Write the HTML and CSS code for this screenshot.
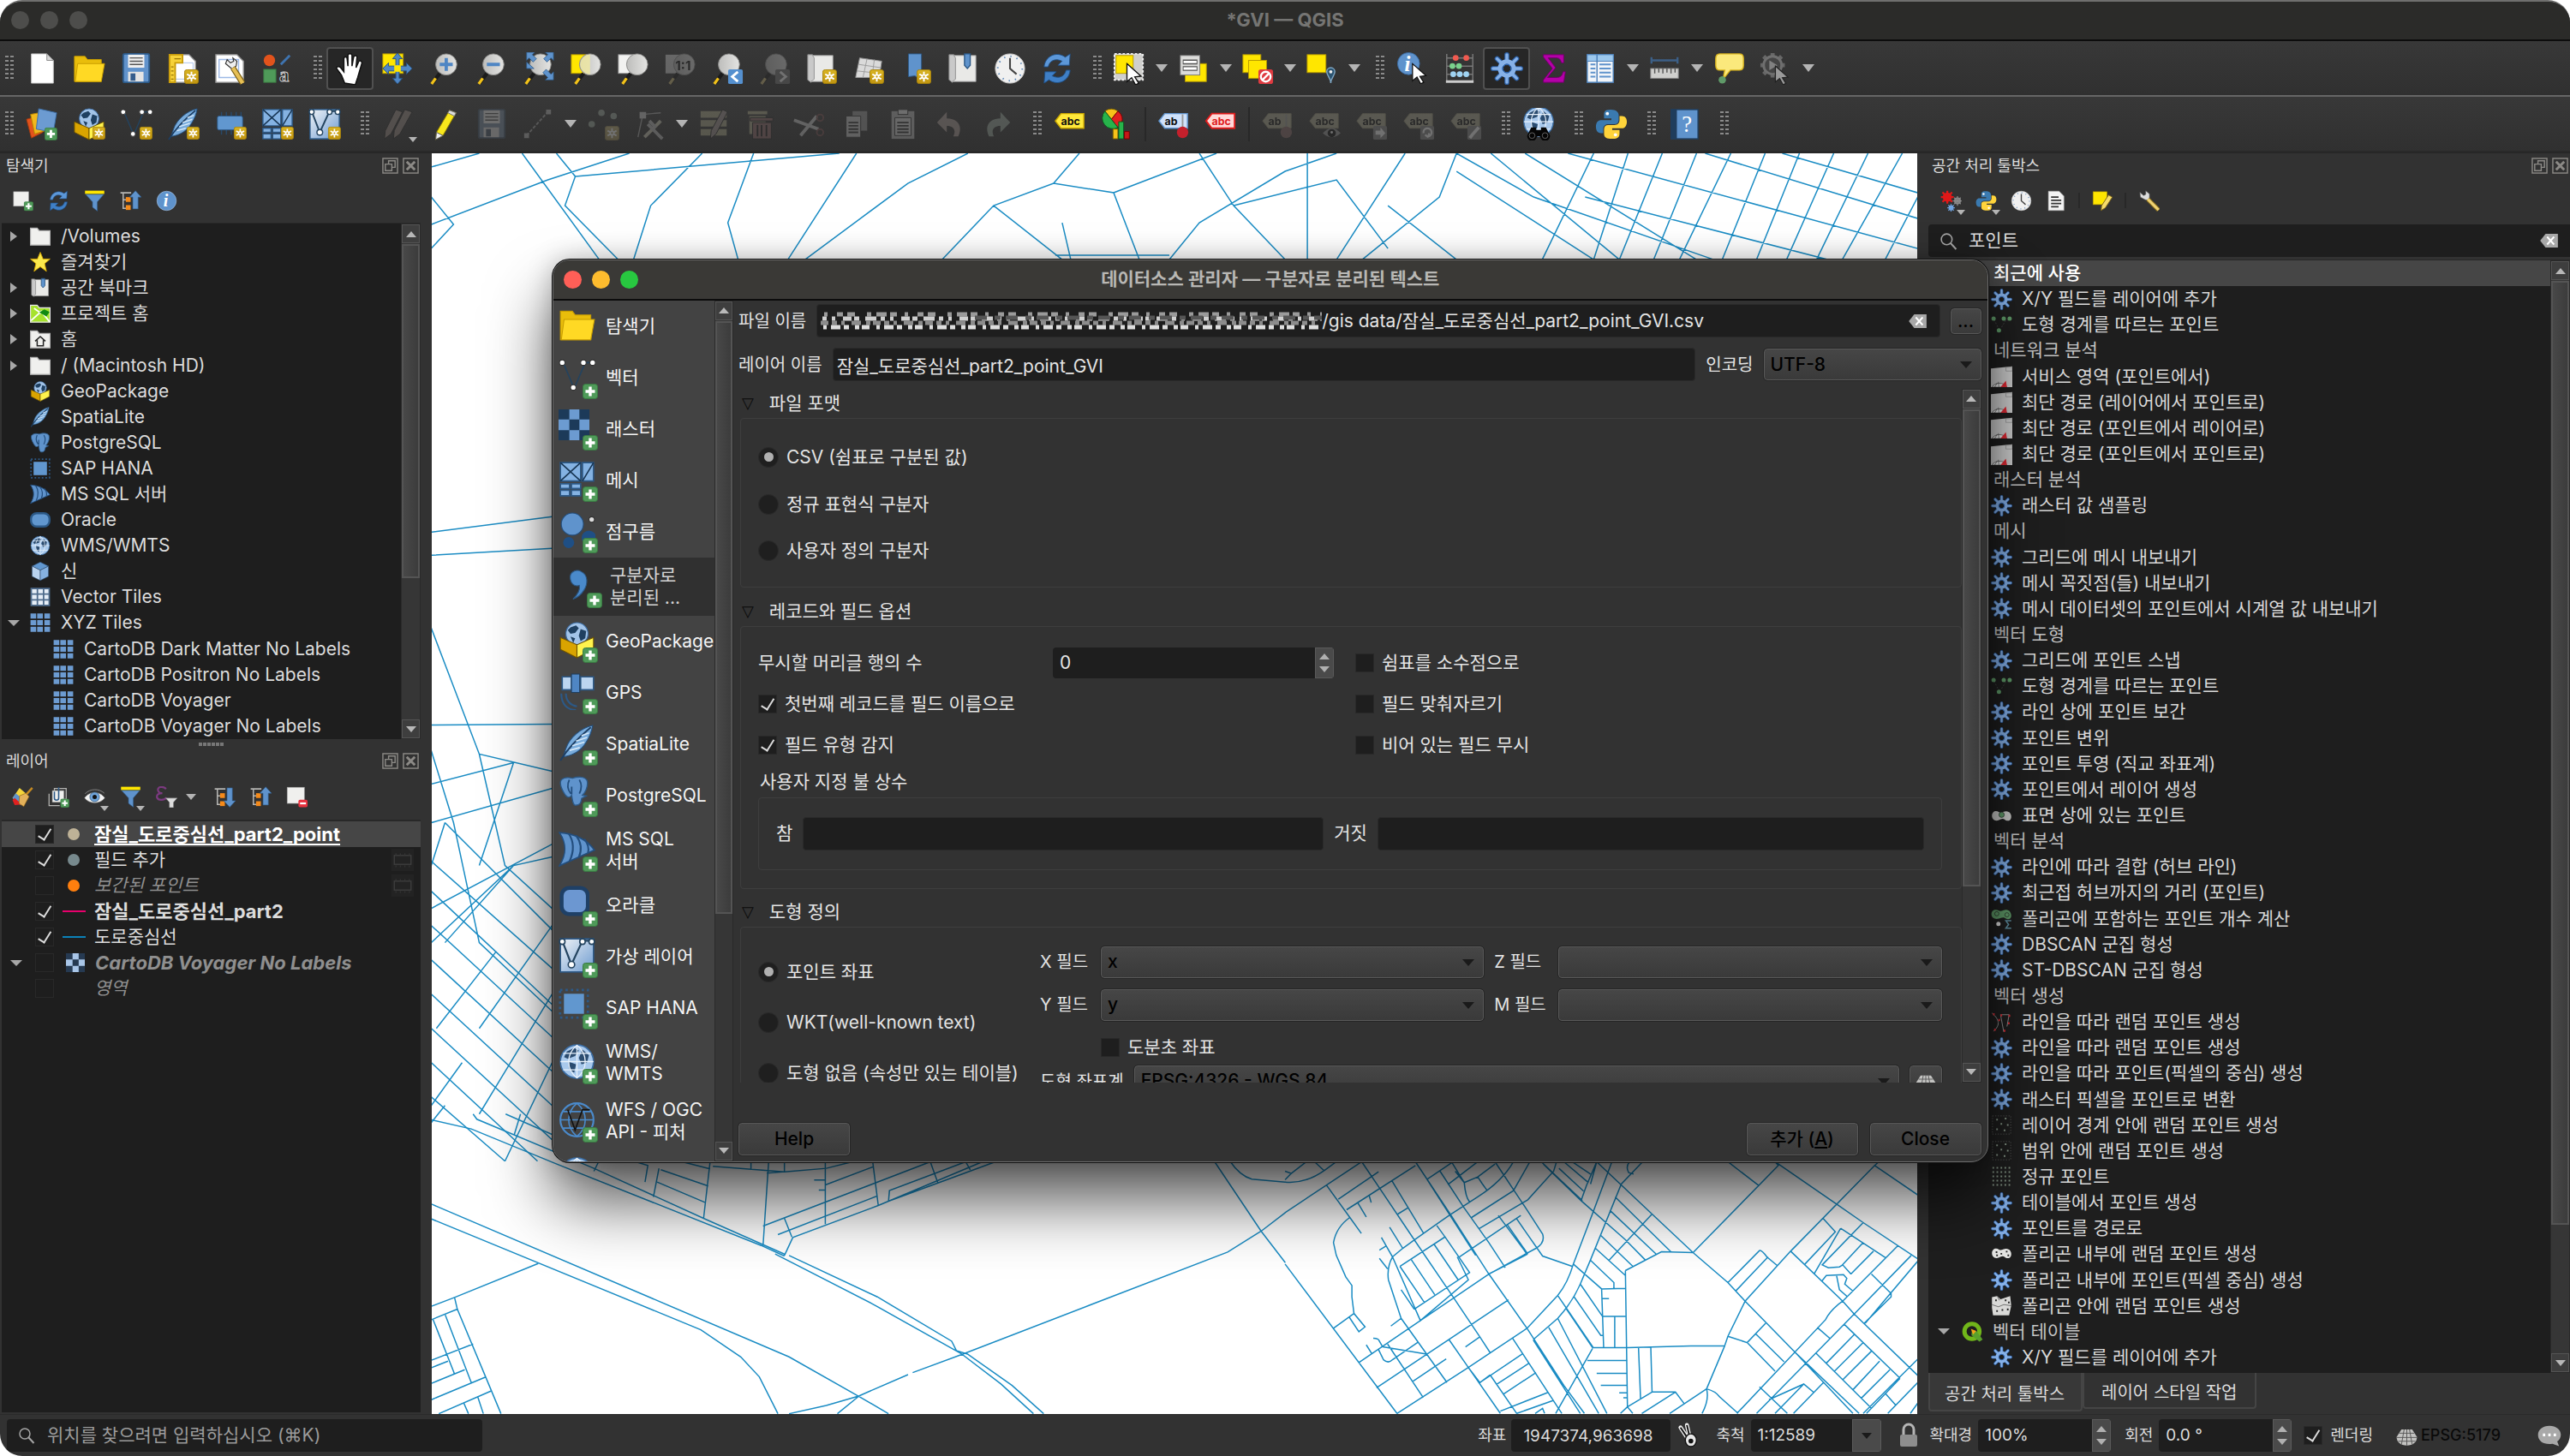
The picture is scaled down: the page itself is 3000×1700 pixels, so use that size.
FILE: index.html
```html
<!DOCTYPE html>
<html lang="ko">
<head>
<meta charset="utf-8">
<title>*GVI — QGIS</title>
<link rel="stylesheet" href="styles.css">
</head>
<body>
<svg class="defs" aria-hidden="true">
<defs>
<linearGradient id="lens" x1="0" x2="1"><stop offset="0" stop-color="#bdbdbb"/><stop offset="1" stop-color="#e4e4e2"/></linearGradient>
<linearGradient id="btn" x1="0" y1="0" x2="0" y2="1"><stop offset="0" stop-color="#d9b422"/><stop offset="1" stop-color="#c09410"/></linearGradient>
<linearGradient id="pale" x1="0" y1="0" x2="1" y2="1"><stop offset="0" stop-color="#f0f3f7"/><stop offset="1" stop-color="#6d9bd0"/></linearGradient>
<symbol id="b-star" viewBox="0 0 18 18"><rect x=".5" y=".5" width="17" height="17" rx="3" fill="url(#btn)" stroke="#a8830a"/><path d="M9 3v12M3.500 6l11 6M14.500 6l-11 6" stroke="#fff" stroke-width="2"/><circle cx="9" cy="9" r="3" fill="#fff"/><circle cx="9" cy="9" r="1.200" fill="#c79b12"/></symbol>
<symbol id="b-plus" viewBox="0 0 18 18"><rect x=".5" y=".5" width="17" height="17" rx="3" fill="#4f9a59" stroke="#3a7a43"/><path d="M9 3.500v11M3.500 9h11" stroke="#fff" stroke-width="3.400"/></symbol>
<symbol id="mag" viewBox="0 0 40 40"><path d="M14 26L5 38" stroke="#1b1b1b" stroke-width="4.500"/><path d="M9 32l-5 7" stroke="#f2c21a" stroke-width="3.500"/><circle cx="22" cy="15" r="13" fill="url(#lens)" stroke="#8a8a88"/></symbol>
<symbol id="new" viewBox="0 0 40 40"><path d="M7 2h19l8 8v28H7z" fill="#fff" stroke="#c4c4c4"/><path d="M26 2v8h8z" fill="#d8d8d8" stroke="#8a8a8a"/></symbol>
<symbol id="folder" viewBox="0 0 40 40"><path d="M2 5h13l3 4h17v27H2z" fill="#e9bd0b" stroke="#c89d00"/><path d="M6 14h33l-4 22H3z" fill="#ffd924" stroke="#c89d00"/></symbol>
<symbol id="save" viewBox="0 0 40 40"><rect x="4" y="2" width="32" height="35" rx="2" fill="#6193cc" stroke="#2c5987" stroke-width="2"/><rect x="10" y="3" width="20" height="16" fill="#f0f0f0"/><path d="M12 7h16M12 11h16M12 15h16" stroke="#555" stroke-width="1.500"/><rect x="10" y="24" width="19" height="12" fill="#e4e4e4"/><rect x="13" y="26" width="6" height="9" fill="#355d8d"/></symbol>
<symbol id="layout" viewBox="0 0 40 40"><path d="M3 3h24l8 8v26H3z" fill="#fff" stroke="#8d8d8d" stroke-width="1.500"/><path d="M7 13h25v20H7z" fill="none" stroke="#a9c2ea"/><path d="M3 3h16v10h-9v24H3z" fill="#f6d23a" stroke="#c79b0b" stroke-width="2"/><path d="M9 8h8M5 18h3M5 23h3M5 28h3M5 33h3" stroke="#9a7707" stroke-width="1.500"/><use href="#b-star" x="21" y="21" width="18" height="18"/></symbol>
<symbol id="layoutmgr" viewBox="0 0 40 40"><path d="M2 3h26l8 8v26H2z" fill="#fff" stroke="#8d8d8d" stroke-width="1.500"/><path d="M6 9h24v22H6z" fill="none" stroke="#9db9e6" stroke-width="1.500"/><path d="M16 9l4 4 4-2-1-4 5 4-1 6-3 2 2 4-6-4-6-5z" fill="#eee" stroke="#333" stroke-width="1.200"/><path d="M23 19l12 19" stroke="#7a6017" stroke-width="7"/><path d="M23 19l12 19" stroke="#e6bf55" stroke-width="4.500"/></symbol>
<symbol id="style" viewBox="0 0 40 40"><circle cx="10" cy="10" r="7" fill="#e2531c"/><path d="M24 15L35 4" stroke="#3f74b0" stroke-width="3"/><rect x="3" y="21" width="15" height="16" fill="#4f9a59" stroke="#3a7a43"/><text x="22" y="36" font-family="Liberation Serif" font-weight="700" font-size="24" fill="#222" stroke="#ccc">a</text></symbol>
<symbol id="hand" viewBox="0 0 40 40"><path d="M13 38l-4-10-6-8c0-3 4-3 6 0l3 4V8c0-3 4-3 4 0l1 9V4c0-3 5-3 5 0v13l2-11c1-3 5-2 4 1l-1 12 3-7c1-3 5-1 4 2l-5 17-3 9z" fill="#fff" stroke="#111" stroke-width="1.600"/></symbol>
<symbol id="pansel" viewBox="0 0 40 40"><rect x="2" y="2" width="25" height="24" fill="#ffe600" stroke="#b79a00"/><path d="M20 1l6 7h-4v9h9v-4l7 7-7 7v-4h-9v9h4l-6 7-6-7h4v-9H9v4l-7-7 7-7v4h9V8h-4z" fill="#4f86c4" stroke="#28527f"/><rect x="16" y="16" width="8" height="8" fill="#ffe600"/></symbol>
<symbol id="zoomin" viewBox="0 0 40 40"><use href="#mag"/><path d="M22 7v16M14 15h16" stroke="#4f86c4" stroke-width="4"/></symbol>
<symbol id="zoomout" viewBox="0 0 40 40"><use href="#mag"/><path d="M14 15h16" stroke="#4f86c4" stroke-width="4"/></symbol>
<symbol id="zoomfull" viewBox="0 0 40 40"><use href="#mag"/><path d="M5 0h10l-3 3 5 5-4 4-5-5-3 3zM38 0v10l-3-3-5 5-4-4 5-5-3-3zM38 34H28l3-3-6-6 4-4 6 6 3-3zM5 20V12l9 8z" fill="#5f93cc" stroke="#2c5987" stroke-width=".8"/></symbol>
<symbol id="zoomsel" viewBox="0 0 40 40"><rect x="2" y="3" width="26" height="23" fill="#ffe600" stroke="#b79a00"/><use href="#mag" x="3"/><path d="M25 3a12 12 0 000 24z" fill="#f0e9a0" opacity=".8"/></symbol>
<symbol id="zoomlayer" viewBox="0 0 40 40"><rect x="2" y="3" width="26" height="23" fill="#f2f2f0" stroke="#999"/><use href="#mag" x="3"/></symbol>
<symbol id="zoom11" viewBox="0 0 40 40"><rect x="2" y="3" width="26" height="23" fill="#d8d8d8"/><use href="#mag" x="3"/><text x="14" y="22" font-family="Inter" font-weight="700" font-size="16" fill="#111">1:1</text></symbol>
<symbol id="zoomlast" viewBox="0 0 40 40"><use href="#mag"/><rect x="21" y="21" width="18" height="18" rx="2" fill="#5590cf"/><path d="M33 24l-7 6 7 6" fill="none" stroke="#fff" stroke-width="3"/></symbol>
<symbol id="zoomnext" viewBox="0 0 40 40"><use href="#mag"/><rect x="21" y="21" width="18" height="18" rx="2" fill="#777"/><path d="M27 24l7 6-7 6" fill="none" stroke="#fff" stroke-width="3"/></symbol>
<symbol id="newmap" viewBox="0 0 40 40"><path d="M3 3h6l2 4v27l-4 3-4-3z" fill="#c9c9c9" stroke="#888"/><path d="M9 4h25v32H7l4-3V7z" fill="#e9e9e7" stroke="#999"/><use href="#b-star" x="21" y="21" width="18" height="18"/></symbol>
<symbol id="map3d" viewBox="0 0 40 40"><path d="M9 7l27 4-3 20H4z" fill="#dadada" stroke="#999"/><path d="M18 8l-5 23M27 9l-3 22M8 15l27 4M6 23l28 3" stroke="#9c9c9c" fill="none"/><use href="#b-star" x="21" y="21" width="18" height="18"/></symbol>
<symbol id="bmnew" viewBox="0 0 40 40"><path d="M11 2h16v33l-8-6-8 1z" fill="#5f93cc" stroke="#2c5987"/><use href="#b-star" x="21" y="21" width="18" height="18"/></symbol>
<symbol id="bookmarks" viewBox="0 0 40 40"><path d="M3 3h6l2 4v27l-4 3-4-3z" fill="#c9c9c9" stroke="#888"/><path d="M9 4h27v32H7l4-3V7z" fill="#e9e9e7" stroke="#999"/><path d="M22 2h7v14l-3.500 4L22 16z" fill="#5f93cc" stroke="#2c5987" stroke-width="1.500"/></symbol>
<symbol id="clock" viewBox="0 0 40 40"><circle cx="20" cy="20" r="18" fill="#f0f0f0" stroke="#c8c8c8"/><path d="M20 7v13l8 7" fill="none" stroke="#444" stroke-width="2.200"/><circle cx="20" cy="20" r="15" fill="none" stroke="#5c87b8" stroke-width="2" stroke-dasharray="1.500 6.350"/></symbol>
<symbol id="refresh" viewBox="0 0 40 40"><path d="M4 18C5 5 19-2 30 6l6-4-1 14H21l5-5C18 7 11 10 9 18z" fill="#5c97d8" stroke="#1f4f85"/><path d="M36 22c-1 13-15 20-26 12l-6 4 1-14h14l-5 5c8 4 15 1 17-7z" fill="#3f7fc6" stroke="#1f4f85"/></symbol>
<symbol id="cursor" viewBox="0 0 24 28"><path d="M2 1l18 16-8 1 5 8-4 2-5-9-6 5z" fill="#fff" stroke="#111" stroke-width="1.500"/></symbol>
<symbol id="select" viewBox="0 0 40 40"><rect x="2" y="2" width="35" height="32" fill="#cfcfcd" stroke="#eee" stroke-width="2" stroke-dasharray="3 2"/><rect x="4" y="4" width="21" height="22" fill="#ffe600" stroke="#b79a00"/><use href="#cursor" x="15" y="13" width="24" height="27"/></symbol>
<symbol id="selform" viewBox="0 0 40 40"><rect x="10" y="14" width="26" height="22" fill="#ffe600" stroke="#b79a00"/><rect x="4" y="4" width="24" height="24" fill="#dcdcda" stroke="#777"/><path d="M7 12h18M7 20h18" stroke="#555" stroke-width="6"/><path d="M8 12h16M8 20h16" stroke="#fff" stroke-width="3"/></symbol>
<symbol id="deselect" viewBox="0 0 40 40"><rect x="2" y="3" width="22" height="22" fill="#ffe600" stroke="#b79a00"/><rect x="9" y="10" width="22" height="22" fill="#ffe600" stroke="#b79a00"/><rect x="21" y="21" width="18" height="18" rx="3" fill="#df3b41"/><circle cx="30" cy="30" r="6" fill="none" stroke="#fff" stroke-width="2.500"/><path d="M26 34l8-8" stroke="#fff" stroke-width="2.500"/></symbol>
<symbol id="selloc" viewBox="0 0 40 40"><rect x="2" y="3" width="23" height="22" fill="#ffe600" stroke="#b79a00"/><path d="M31 38c0-7-5-9-5-14a5 5 0 0110 0c0 5-5 7-5 14z" fill="#2c5471" stroke="#7fa7c4" stroke-width="1.500"/><circle cx="31" cy="24" r="2" fill="#eee"/></symbol>
<symbol id="identify" viewBox="0 0 40 40"><circle cx="15" cy="14" r="13.500" fill="#5f93cc" stroke="#3c6ea5"/><text x="10" y="23" font-family="Liberation Serif" font-weight="700" font-style="italic" font-size="26" fill="#fff">i</text><use href="#cursor" x="18" y="13" width="22" height="26"/></symbol>
<symbol id="abacus" viewBox="0 0 40 40"><path d="M4 2v34M36 2v34M4 7h32M4 17h32M4 27h32" stroke="#777" stroke-width="1.600"/><path d="M3 36h34" stroke="#ccc" stroke-width="3"/><circle cx="15" cy="7" r="3.500" fill="#f05a50"/><circle cx="28" cy="7" r="3.500" fill="#f05a50"/><circle cx="11" cy="17" r="3.500" fill="#7ad28c"/><circle cx="19" cy="17" r="3.500" fill="#7ad28c"/><circle cx="12" cy="27" r="3.500" fill="#9fd3f2"/><circle cx="20" cy="27" r="3.500" fill="#9fd3f2"/><circle cx="28" cy="27" r="3.500" fill="#9fd3f2"/></symbol>
<symbol id="gear" viewBox="0 0 40 40"><path d="M20 3v10M20 27v10M3 20h10M27 20h10M8 8l7 7M25 25l7 7M32 8l-7 7M15 25l-7 7" stroke="#2e62a8" stroke-width="6" stroke-linecap="round"/><path d="M20 3v9M20 28v9M3 20h9M28 20h9M8 8l7 7M25 25l7 7M32 8l-7 7M15 25l-7 7" stroke="#86b1e8" stroke-width="3.600" stroke-linecap="round"/><circle cx="20" cy="20" r="8.500" fill="none" stroke="#86b1e8" stroke-width="5.500"/><circle cx="20" cy="20" r="5.300" fill="none" stroke="#2e62a8"/></symbol>
<symbol id="sigma" viewBox="0 0 40 40"><path d="M7 3h25v10h-3c-1-5-3-6-7-6h-9l9 12-10 12h11c5 0 7-2 8-7h3l-2 13H7v-3l11-14L7 6z" fill="#b400a8" stroke="#6d0066"/></symbol>
<symbol id="table" viewBox="0 0 40 40"><rect x="4" y="3" width="32" height="34" fill="#f2f5f9" stroke="#4b7fb8" stroke-width="1.500"/><rect x="4" y="3" width="32" height="8" fill="#9cc8ee" stroke="#4b7fb8"/><path d="M16 3v34" stroke="#4b7fb8" stroke-width="1.500"/><path d="M8 15h6M8 20h6M8 25h6M8 30h6M19 15h14M19 20h14M19 25h14M19 30h14" stroke="#5f93cc" stroke-width="2"/></symbol>
<symbol id="ruler" viewBox="0 0 40 40"><path d="M4 6v8M36 6v8M4 10h32" stroke="#3c5f86" stroke-width="2.500"/><rect x="3" y="20" width="34" height="12" fill="#cfcfcd" stroke="#888"/><path d="M8 20v6M13 20v5M18 20v6M23 20v5M28 20v6M33 20v5" stroke="#555" stroke-width="1.500"/></symbol>
<symbol id="tip" viewBox="0 0 40 40"><path d="M8 2h24q5 0 5 6v8q0 6-5 6H21L12 33l2-11H8q-5 0-5-6V8q0-6 5-6z" fill="#fbe97c" stroke="#d9b41c" stroke-width="1.500"/><circle cx="11" cy="34" r="4.500" fill="#5f9a68"/></symbol>
<symbol id="gearplay" viewBox="0 0 40 40"><path d="M16 1v30M1 16h30M5 5l22 22M27 5L5 27" stroke="#999" stroke-width="5"/><circle cx="16" cy="16" r="11" fill="#555" stroke="#aaa" stroke-width="3"/><path d="M12 10l10 6-10 6z" fill="#ccc"/><use href="#cursor" x="17" y="16" width="22" height="24"/></symbol>
<symbol id="datasrc" viewBox="0 0 40 40"><path d="M1 14l14-4 6 20-14 7z" fill="#e2531c" stroke="#a53a0e"/><path d="M6 8l16-3 5 22-16 5z" fill="#f2b81c" stroke="#b58500"/><path d="M16 1l22 5-4 24-21-4z" fill="#6c9bd1" stroke="#3c6ea5"/><use href="#b-plus" x="23" y="24" width="16" height="16"/></symbol>
<symbol id="box" viewBox="0 0 40 40"><circle cx="20" cy="13" r="12" fill="#a3c4e8" stroke="#3c6ea5"/><path d="M13 6l6-2 3 3-4 5-5 1-3-4zM24 8l6 2-1 8-5 3-2-6zM13 16l5 2-2 5z" fill="#1f4061"/><path d="M2 17l18 8v14L2 30z" fill="#d9a400" stroke="#6d5200"/><path d="M38 17l-18 8v14l18-9z" fill="#fff34d" stroke="#6d5200"/></symbol>
<symbol id="gpkg" viewBox="0 0 40 40"><use href="#box"/><use href="#b-star" x="24" y="23" width="16" height="16"/></symbol>
<symbol id="vecb" viewBox="0 0 40 40"><path d="M5 5l12 28L29 5h8" fill="none" stroke="#23435f" stroke-width="1.500"/><g fill="#fff" stroke="#333"><circle cx="4" cy="5" r="3"/><circle cx="27" cy="5" r="3"/><circle cx="37" cy="5" r="3"/><circle cx="16" cy="32" r="3"/></g></symbol>
<symbol id="vec" viewBox="0 0 40 40"><use href="#vecb"/><use href="#b-star" x="24" y="23" width="16" height="16"/></symbol>
<symbol id="feather" viewBox="0 0 40 40"><path d="M37 1C24 4 12 14 8 26l-3 9c7-1 18-4 25-16 4-6 6-12 7-18z" fill="#79acdc" stroke="#23507f"/><path d="M35 3C24 12 10 26 2 39" fill="none" stroke="#1d3e63" stroke-width="1.800"/><path d="M33 9l-8 3M31 14l-12 4M28 19l-13 4M23 25l-11 3" stroke="#d6e8f8" stroke-width="1.500"/></symbol>
<symbol id="splite" viewBox="0 0 40 40"><use href="#feather"/><use href="#b-star" x="24" y="23" width="16" height="16"/></symbol>
<symbol id="chip" viewBox="0 0 40 40"><path d="M9 5v28M15 5v28M21 5v28M27 5v28M33 5v28" stroke="#294a6b" stroke-width="1.500"/><rect x="4" y="10" width="31" height="17" rx="2" fill="#6197cf" stroke="#2c5987"/><use href="#b-star" x="24" y="23" width="16" height="16"/></symbol>
<symbol id="meshb" viewBox="0 0 40 40"><path d="M2 2h22v20H2zM26 2h12v20H26zM2 25h10v5H2zM14 25h10v5H14zM2 32h10v6H2zM14 32h10v6H14z" fill="#84b2e2" stroke="#2c5987" stroke-width="1.500"/><path d="M2 2l22 20M24 2L2 22M38 2L26 22" stroke="#173553" stroke-width="1.500"/></symbol>
<symbol id="mesh" viewBox="0 0 40 40"><use href="#meshb"/><use href="#b-star" x="24" y="23" width="16" height="16"/></symbol>
<symbol id="virtb" viewBox="0 0 40 40"><rect x="2" y="2" width="36" height="36" fill="url(#pale)" stroke="#2c5987" stroke-width="1.500"/><path d="M4 4l10 26L26 4h10" fill="none" stroke="#23435f" stroke-width="2"/><g fill="#fff" stroke="#23435f" stroke-width="1.500"><circle cx="4" cy="5" r="3"/><circle cx="26" cy="5" r="3"/><circle cx="36" cy="5" r="3"/><circle cx="14" cy="30" r="3.500"/></g></symbol>
<symbol id="virt" viewBox="0 0 40 40"><use href="#virtb"/><use href="#b-star" x="24" y="23" width="16" height="16"/></symbol>
<symbol id="pencil" viewBox="0 0 40 40"><path d="M26 3l8 3-16 28-9 5 1-9z" fill="#f8e71c" stroke="#8d7b00"/><path d="M26 3l8 3-2 4-8-4z" fill="#ddd" stroke="#777"/><path d="M10 30l8 4-9 5z" fill="#eee" stroke="#555"/></symbol>
<symbol id="pencils" viewBox="0 0 40 40"><path d="M18 2l8 3-14 27-8 6 1-10zM29 2l9 3-15 27-8 6 1-10z" fill="#b08a78" stroke="#222"/></symbol>
<symbol id="linepts" viewBox="0 0 40 40"><path d="M6 34L32 5" stroke="#aaa" stroke-width="2" stroke-dasharray="4 2"/><path d="M3 31h6v6H3zM30 2h6v6h-6z" fill="#bbb"/></symbol>
<symbol id="pts" viewBox="0 0 40 40"><circle cx="6" cy="20" r="4" fill="#8fb094"/><circle cx="18" cy="6" r="4" fill="#8fb094"/><circle cx="33" cy="10" r="4" fill="#8fb094"/><use href="#b-star" x="22" y="22" width="18" height="18"/></symbol>
<symbol id="vertex" viewBox="0 0 40 40"><path d="M6 36L12 8l22-2" fill="none" stroke="#aaa" stroke-width="1.500"/><rect x="8" y="5" width="8" height="8" fill="#ccc"/><path d="M14 36L34 16" stroke="#d4cc9a" stroke-width="4"/><path d="M18 20l18 18M20 16l8 8" stroke="#bbb" stroke-width="4"/></symbol>
<symbol id="tabedit" viewBox="0 0 40 40"><path d="M3 4h32v8H3zM3 15h32v8H3zM3 26h32v8H3z" fill="#b4ac5c"/><path d="M30 2l6 3-14 27-7 6 1-10z" fill="#b0908a" stroke="#222"/></symbol>
<symbol id="trash" viewBox="0 0 40 40"><path d="M3 4h24v4H3zM5 10h20v22H5z" fill="#b4ac5c"/><path d="M6 12h28v4H6zM9 18h23v20H9z" fill="#c06060" stroke="#222"/><path d="M15 21v14M20 21v14M26 21v14" stroke="#222" stroke-width="2"/></symbol>
<symbol id="cut" viewBox="0 0 40 40"><path d="M2 15l30 11M10 34L30 10" stroke="#ccc" stroke-width="4"/><circle cx="34" cy="12" r="4" fill="none" stroke="#a44" stroke-width="2"/><circle cx="34" cy="30" r="4" fill="none" stroke="#a44" stroke-width="2"/></symbol>
<symbol id="copy" viewBox="0 0 40 40"><path d="M16 4h18v24H16z" fill="#999"/><path d="M8 10h18v26H8z" fill="#ccc" stroke="#333"/><path d="M11 18h12M11 22h12M11 26h12M11 30h12" stroke="#333" stroke-width="2"/></symbol>
<symbol id="paste" viewBox="0 0 40 40"><path d="M6 4h28v34H6z" fill="#bbb"/><rect x="14" y="2" width="12" height="6" fill="#eee" stroke="#333"/><path d="M10 12h20v22H10z" fill="#ddd" stroke="#333"/><path d="M13 18h14M13 22h14M13 26h14M13 30h14" stroke="#333" stroke-width="2"/></symbol>
<symbol id="undo" viewBox="0 0 40 40"><path d="M4 18L16 5v8c14 0 20 10 14 22h-6c4-8 0-13-8-13v8z" fill="#c09a8a"/></symbol>
<symbol id="redo" viewBox="0 0 40 40"><path d="M36 18L24 5v8c-14 0-20 10-14 22h6c-4-8 0-13 8-13v8z" fill="#8ab095"/></symbol>
<symbol id="label" viewBox="0 0 40 40"><path d="M2 16L9 7h28v18H9z" fill="#ffe93a" stroke="#c9a600" stroke-width="1.500"/><text x="9" y="21" font-family="Inter" font-weight="700" font-size="13" fill="#111">abc</text></symbol>
<symbol id="labelred" viewBox="0 0 40 40"><path d="M2 16L9 7h28v18H9z" fill="#ffd9d9" stroke="#e01c1c" stroke-width="2"/><text x="9" y="21" font-family="Inter" font-weight="700" font-size="13" fill="#e01c1c">abc</text></symbol>
<symbol id="labelpin" viewBox="0 0 40 40"><path d="M2 16L9 7h28v18H9z" fill="#cfe2fb" stroke="#5f93cc" stroke-width="1.500"/><text x="9" y="21" font-family="Inter" font-weight="700" font-size="13" fill="#111">ab</text><path d="M31 8v18" stroke="#999" stroke-width="2"/><circle cx="31" cy="30" r="7" fill="#c4202c"/></symbol>
<symbol id="dimtag" viewBox="0 0 40 40"><path d="M2 16L9 7h28v18H9z" fill="#b5ad6c" stroke="#99904a"/><text x="9" y="21" font-family="Inter" font-weight="700" font-size="13" fill="#111">abc</text></symbol>
<symbol id="dimpin" viewBox="0 0 40 40"><path d="M2 16L9 7h28v18H9z" fill="#b5ad6c" stroke="#99904a"/><text x="9" y="21" font-family="Inter" font-weight="700" font-size="13" fill="#111">ab</text><path d="M31 8v18" stroke="#999" stroke-width="2"/><circle cx="31" cy="30" r="7" fill="#b0605c"/></symbol>
<symbol id="dimeye" viewBox="0 0 40 40"><use href="#dimtag"/><path d="M18 31q11-12 22 0-11 10-22 0z" fill="#999"/><circle cx="29" cy="31" r="5" fill="#111"/><circle cx="29" cy="30" r="1.500" fill="#fff"/></symbol>
<symbol id="dimmove" viewBox="0 0 40 40"><use href="#dimtag"/><rect x="22" y="22" width="17" height="17" rx="2" fill="#888"/><path d="M25 28h6v-4l6 7-6 6v-4h-6z" fill="#fff"/></symbol>
<symbol id="dimrot" viewBox="0 0 40 40"><use href="#dimtag"/><rect x="22" y="22" width="17" height="17" rx="2" fill="#888"/><path d="M26 31a5 5 0 116 4l1-4M32 36l-4-3" fill="none" stroke="#fff" stroke-width="2.500"/></symbol>
<symbol id="dimedit" viewBox="0 0 40 40"><use href="#dimtag"/><rect x="22" y="22" width="17" height="17" rx="2" fill="#888"/><path d="M36 24l-8 9-3 4" fill="none" stroke="#fff" stroke-width="4"/></symbol>
<symbol id="diagram" viewBox="0 0 40 40"><path d="M13 14L5 4A13 13 0 0121 4z" fill="#f7c21a" stroke="#7a6200"/><path d="M13 14l8-10a12 12 0 010 20z" fill="#e02020" stroke="#700"/><path d="M13 14l8 10A13 13 0 015 4z" fill="#27b34b" stroke="#0b5a20"/><path d="M15 26h6v12h-6z" fill="#f7c21a" stroke="#7a6200"/><path d="M22 17h6v21h-6z" fill="#27b34b" stroke="#0b5a20"/><path d="M29 29h6v9h-6z" fill="#c41818" stroke="#700"/></symbol>
<symbol id="globe" viewBox="0 0 40 40"><circle cx="20" cy="20" r="18" fill="#a9c9ec" stroke="#3c6ea5" stroke-width="1.500"/><path d="M9 9l8-4 5 3-4 6-8 3-4-2zM26 7l7 6-2 8-6 2-3-7zM11 20l8 3-2 9-5-3z" fill="#2b4c70"/><path d="M2 20h36M5 11h30M5 29h30M20 2v36M20 2c-12 10-12 26 0 36M20 2c12 10 12 26 0 36" fill="none" stroke="#e8f1fb" stroke-width="1.200"/></symbol>
<symbol id="metasearch" viewBox="0 0 40 40"><use href="#globe" y="-3"/><path d="M11 24h6v3h6v-3h6l5 10a6 6 0 01-12 1h-4a6 6 0 01-12-1z" fill="#050505"/><circle cx="12" cy="34" r="3.500" fill="none" stroke="#666"/><circle cx="28" cy="34" r="3.500" fill="none" stroke="#666"/></symbol>
<symbol id="python" viewBox="0 0 40 40"><path d="M19 2c-8 0-8 3-8 7v4h9v2H7c-4 0-6 4-6 8 0 5 2 8 6 8h3v-5c0-4 3-6 6-6h8c3 0 5-2 5-5V9c0-4-3-7-10-7z" fill="#3a7ab0"/><path d="M21 38c8 0 9-3 9-7v-4h-9v-2h12c4 0 6-4 6-8 0-4-2-7-6-7h-3v5c0 4-3 6-6 6h-8c-3 0-5 2-5 5v6c0 4 3 6 10 6z" fill="#ffd43b"/><circle cx="15" cy="7" r="2" fill="#fff"/><circle cx="25" cy="33" r="2" fill="#fff"/></symbol>
<symbol id="help" viewBox="0 0 40 40"><rect x="4" y="2" width="33" height="36" fill="#5f93cc" stroke="#1f3d5c" stroke-width="1.500"/><path d="M4 2h7v36H4z" fill="#1f3d5c"/><text x="17" y="29" font-family="Liberation Serif" font-size="28" fill="#fff">?</text></symbol>
<symbol id="addlayer" viewBox="0 0 40 40"><rect x="3" y="3" width="28" height="27" fill="#f0f0ee" stroke="#aaa"/><use href="#b-plus" x="22" y="21" width="18" height="18"/></symbol>
<symbol id="filter" viewBox="0 0 40 40"><path d="M3 8h34L25 22v17l-9-7V22z" fill="#5f93cc" stroke="#2c5987"/><rect x="2" y="1" width="36" height="6" fill="#ffe600"/></symbol>
<symbol id="collapse" viewBox="0 0 40 40"><path d="M1 5h20M6 5v29h8M6 18h8" fill="none" stroke="#b5b5b3" stroke-width="2.500"/><rect x="11" y="13" width="9" height="9" fill="#f58a1a"/><rect x="11" y="28" width="9" height="9" fill="#f58a1a"/><path d="M29 1l11 12h-6v22H24V13h-6z" fill="#5f93cc" stroke="#2c5987"/></symbol>
<symbol id="expand" viewBox="0 0 40 40"><path d="M1 5h20M6 5v29h8M6 18h8" fill="none" stroke="#b5b5b3" stroke-width="2.500"/><rect x="11" y="13" width="9" height="9" fill="#f58a1a"/><rect x="11" y="28" width="9" height="9" fill="#f58a1a"/><path d="M29 39L18 27h6V3h10v24h6z" fill="#5f93cc" stroke="#2c5987"/></symbol>
<symbol id="info" viewBox="0 0 40 40"><circle cx="20" cy="20" r="18" fill="#5f93cc" stroke="#a8c6e6" stroke-width="1"/><text x="14" y="31" font-family="Liberation Serif" font-weight="700" font-style="italic" font-size="32" fill="#fff">i</text></symbol>
<symbol id="dir" viewBox="0 0 40 40"><path d="M1 4h13l4 5h21v28H1z" fill="#f0f0ee" stroke="#b5b5b5" stroke-width="2"/></symbol>
<symbol id="dirhome" viewBox="0 0 40 40"><use href="#dir"/><path d="M10 24l10-9 10 9M14 22v11h12V22" fill="none" stroke="#222" stroke-width="2.500"/></symbol>
<symbol id="dirmap" viewBox="0 0 40 40"><path d="M1 4h13l4 5h21v28H1z" fill="#a6e22e" stroke="#e6e6e6" stroke-width="2"/><path d="M2 34l20-18 16 20M8 10l14 10" fill="none" stroke="#fff" stroke-width="3"/><path d="M18 18l10-6 10 5-6 9z" fill="#128a12"/></symbol>
<symbol id="star" viewBox="0 0 40 40"><path d="M20 1l5.500 13H39L28.500 23 32 38 20 29 8 38l3.500-15L1 14h13.500z" fill="#fbe94c" stroke="#d9a800" stroke-width="1.500"/></symbol>
<symbol id="elephant" viewBox="0 0 40 40"><path d="M3 6c4-5 11-4 15-3 6-2 16-3 19 3 2 8-3 16-6 19l5 1-6 3c-1 6-2 9-8 9-4 0-4-8-5-13-2 3-5 4-8 0C5 19 1 11 3 6z" fill="#5f93cc" stroke="#2c5987" stroke-width="1.500"/><path d="M14 5c-3 6-2 13 2 18M27 5c3 5 3 12 0 18M17 14v10" fill="none" stroke="#234e7d" stroke-width="2"/></symbol>
<symbol id="sap" viewBox="0 0 40 40"><rect x="7" y="7" width="26" height="26" fill="#6197cf"/><rect x="2" y="2" width="36" height="36" fill="none" stroke="#2c5987" stroke-width="3" stroke-dasharray="3 4"/></symbol>
<symbol id="mssql" viewBox="0 0 40 40"><path d="M1 2c13 1 28 5 38 19L1 38C9 25 9 14 1 2z" fill="#5f93cc" stroke="#234e7d" stroke-width="1.500"/><path d="M11 3c6 9 6 19 1 30M19 5c6 8 6 17 3 24M28 9c4 5 5 11 4 15" fill="none" stroke="#234e7d" stroke-width="2"/></symbol>
<symbol id="oracle" viewBox="0 0 40 40"><rect x="2" y="7" width="36" height="26" rx="11" fill="#6197cf" stroke="#2c5987" stroke-width="4"/></symbol>
<symbol id="oraclebig" viewBox="0 0 40 40"><rect x="4" y="3" width="34" height="34" rx="10" fill="#6c97d1" stroke="#1f4066" stroke-width="5"/></symbol>
<symbol id="cube" viewBox="0 0 40 40"><path d="M20 2l16 8-16 8L4 10z" fill="#6197cf" stroke="#2c4a6b"/><path d="M4 10l16 8v20L4 30z" fill="#b9d2ee" stroke="#2c4a6b"/><path d="M36 10l-16 8v20l16-8z" fill="#86b1e0" stroke="#2c4a6b"/></symbol>
<symbol id="vtile" viewBox="0 0 40 40"><path d="M1 2h38v36H1z" fill="#4e6b8b"/><path d="M4 5h9v8H4zM16 5h9v8h-9zM28 5h8v8h-8zM4 16h9v8H4zM16 16h9v8h-9zM28 16h8v8h-8zM4 27h9v8H4zM16 27h9v8h-9zM28 27h8v8h-8z" fill="#e6eef7"/></symbol>
<symbol id="xyz" viewBox="0 0 40 40"><path d="M1 2h11v10H1zM14 2h11v10H14zM28 2h11v10H28zM1 15h11v10H1zM14 15h11v10H14zM28 15h11v10H28zM1 28h11v10H1zM14 28h11v10H14zM28 28h11v10H28z" fill="#6c9bd1"/></symbol>
<symbol id="broom" viewBox="0 0 40 40"><path d="M1 22L14 3l14 12-12 20z" fill="#f4d43a"/><path d="M1 22l6-9 15 12-6 10z" fill="#5f93cc"/><path d="M1 26l4-4 14 12-14 1z" fill="#e02020"/><path d="M14 18l12-5 6 6-10 19-9-6z" fill="#e3b15a" stroke="#8a6114"/><path d="M27 15L38 3" stroke="#c58a22" stroke-width="4"/></symbol>
<symbol id="addgroup" viewBox="0 0 40 40"><path d="M2 14v22h20M12 4h22v20H12z" fill="none" stroke="#b5b5b3" stroke-width="2"/><path d="M8 8h22v22H8z" fill="#f0f0ee" stroke="#777"/><path d="M20 2v20a4 4 0 01-8 0V10" fill="none" stroke="#2c5987" stroke-width="2.500"/><use href="#b-plus" x="23" y="23" width="17" height="17"/></symbol>
<symbol id="eye" viewBox="0 0 40 40"><path d="M1 22C10 8 30 8 39 22 30 34 10 34 1 22z" fill="#f3f3f3" stroke="#666"/><path d="M2 14C12 4 28 4 38 13" fill="none" stroke="#888" stroke-width="1.500"/><circle cx="20" cy="20" r="9" fill="#6fa3d8" stroke="#23435f"/><circle cx="20" cy="20" r="4" fill="#111"/></symbol>
<symbol id="eps" viewBox="0 0 40 40"><path d="M19 5C13-1 2 1 4 8c1 4 5 5 8 5-7 0-11 3-10 8 2 6 13 6 18 0" fill="none" stroke="#7c3a80" stroke-width="3.500"/><path d="M18 22h22l-7 8v10h-8V30z" fill="#ddd" stroke="#666"/></symbol>
<symbol id="removelayer" viewBox="0 0 40 40"><rect x="2" y="2" width="32" height="30" fill="#f0f0ee" stroke="#aaa"/><rect x="23" y="25" width="17" height="14" rx="3" fill="#e8323f"/><path d="M26 32h11" stroke="#fff" stroke-width="3.500"/></symbol>
<symbol id="raster" viewBox="0 0 40 40"><path d="M0 0h40v40H0z" fill="#263a52"/><path d="M14 0h13v13H14zM0 13h14v14H0zM27 13h13v14H27zM14 27h13v13H14z" fill="#a9c6e8"/></symbol>
<symbol id="rasterbig" viewBox="0 0 40 40"><path d="M0 0h40v40H0z" fill="#1c3a59"/><path d="M14 0h13v13H14zM0 13h14v14H0zM27 13h13v14H27zM14 27h13v13H14z" fill="#6c9bd1"/></symbol>
<symbol id="mem" viewBox="0 0 40 40"><rect x="5" y="12" width="30" height="16" fill="none" stroke="#3f3f3f" stroke-width="2"/><path d="M8 8v3M16 8v3M24 8v3M32 8v3M8 30v3M16 30v3M24 30v3M32 30v3" stroke="#333" stroke-width="2"/></symbol>
<symbol id="points" viewBox="0 0 40 40"><path d="M6 10l9 18M20 24l8-13h6" stroke="#555" stroke-dasharray="3 3" fill="none"/><circle cx="5" cy="8" r="4" fill="#5f9a68"/><circle cx="24" cy="8" r="4" fill="#5f9a68"/><circle cx="35" cy="8" r="4" fill="#5f9a68"/><circle cx="15" cy="30" r="4" fill="#5f9a68"/></symbol>
<symbol id="gauge" viewBox="0 0 40 40"><path d="M0 5l40-4v39H0z" fill="#cfcfcf"/><path d="M28 3h12v7H28z" fill="none" stroke="#888"/><path d="M2 40a16 14 0 0128 0z" fill="#eee" stroke="#777" stroke-width="1.500"/><path d="M18 40l10-12 2 12z" fill="#e02b35"/><path d="M7 40l5-8M15 40l-1-10" stroke="#444"/></symbol>
<symbol id="blob" viewBox="0 0 40 40"><path d="M2 20c0-9 8-11 13-7 5 2 6 0 11-1 8-2 13 5 12 11-1 7-8 8-12 4-4-3-7-1-11 1C8 31 2 27 2 20z" fill="#c9c9c7"/><circle cx="20" cy="18" r="5" fill="#5f9a68" stroke="#222"/></symbol>
<symbol id="blobdots" viewBox="0 0 40 40"><path d="M2 18c0-9 8-11 13-7 5 2 6 0 11-1 8-2 13 5 12 11-1 7-8 8-12 4-4-3-7-1-11 1C8 29 2 25 2 18z" fill="#e4e4e2"/><path d="M9 16h3M18 19h3M28 15h3M10 22h3M31 22h3" stroke="#222" stroke-width="3"/></symbol>
<symbol id="blobgreen" viewBox="0 0 40 40"><path d="M1 12C1 3 9 2 15 5c5 2 6 0 11-1 8-2 12 5 12 11 0 5-5 8-10 5-5-4-9-1-13 0C8 22 1 19 1 12z" fill="#5f9a68"/><circle cx="11" cy="11" r="4" fill="none" stroke="#1e1e1e"/><circle cx="30" cy="13" r="4" fill="none" stroke="#1e1e1e"/><circle cx="14" cy="30" r="4" fill="#ddd"/><path d="M38 24H28l5 7-5 7h10" fill="none" stroke="#5f8fa0" stroke-width="2.500"/></symbol>
<symbol id="rline" viewBox="0 0 40 40"><path d="M2 3c14 12 16 22 3 34M18 6l6 32M18 6h16l-4 22" fill="none" stroke="#999" stroke-width="1.500"/><path d="M4 5h3M14 16h3M6 34h3M18 7h3M33 8h3M24 36h3M32 22h3" stroke="#e02b35" stroke-width="4"/></symbol>
<symbol id="rbox" viewBox="0 0 40 40"><rect x="3" y="3" width="34" height="34" fill="none" stroke="#777" stroke-dasharray="2 3"/><path d="M10 10h3M26 8h3M18 18h3M30 20h3M10 28h3M24 30h3" stroke="#8a9a8c" stroke-width="3"/></symbol>
<symbol id="rgrid" viewBox="0 0 40 40"><path d="M3 4h34M3 12h34M3 20h34M3 28h34M3 36h34" stroke="#7f8f80" stroke-width="3" stroke-dasharray="3 4.500"/></symbol>
<symbol id="rpoly" viewBox="0 0 40 40"><path d="M2 4l10-2 6 6 18-6 2 18-4 18H4L2 24z" fill="#d9d9d7"/><path d="M2 18l12 4 10-4 14 2M12 2l4 8" stroke="#333" fill="none"/><path d="M8 10h3M26 10h3M10 30h3M20 28h3M30 27h3M32 14h3" stroke="#222" stroke-width="3.500"/></symbol>
<symbol id="q" viewBox="0 0 40 40"><circle cx="19" cy="20" r="14" fill="none" stroke="#71b61a" stroke-width="8"/><path d="M19 17l9 3 11 15-6 4-15-12z" fill="#5aa02c"/><path d="M17 15l10 4-6 7z" fill="#f5a21a"/></symbol>
<symbol id="gears3" viewBox="0 0 40 40"><path d="M13 1v24M1 13h24M4 4l18 18M22 4L4 22" stroke="#e01818" stroke-width="3.500"/><circle cx="13" cy="13" r="6" fill="none" stroke="#e01818" stroke-width="5"/><path d="M32 11v18M23 20h18M26 14l12 12M38 14L26 26" stroke="#888" stroke-width="2"/><circle cx="32" cy="20" r="5" fill="none" stroke="#888" stroke-width="3"/><path d="M20 26v14M13 33h14M15 28l10 10M25 28L15 38" stroke="#6fa3e0" stroke-width="2"/><circle cx="20" cy="33" r="3" fill="none" stroke="#6fa3e0" stroke-width="3"/></symbol>
<symbol id="doc" viewBox="0 0 40 40"><path d="M5 2h20l9 9v27H5z" fill="#f4f4f4" stroke="#aaa"/><path d="M10 13h14M10 19h19M10 25h19M10 31h14" stroke="#333" stroke-width="2.500"/></symbol>
<symbol id="editsel" viewBox="0 0 40 40"><rect x="2" y="3" width="26" height="24" fill="#ffe600" stroke="#b79a00"/><path d="M31 9l7 4-13 20-8 5 1-9z" fill="#f6dc6a" stroke="#7a6017" stroke-width="1.500"/></symbol>
<symbol id="wrench" viewBox="0 0 40 40"><path d="M3 4l7 6 4-2V1l7 6v9l-2 3-6-1-9-5z" fill="#ddd" stroke="#555"/><path d="M18 17l20 20" stroke="#8a6f1c" stroke-width="8"/><path d="M18 17l20 20" stroke="#efd272" stroke-width="5"/></symbol>
<symbol id="search" viewBox="0 0 40 40"><circle cx="16" cy="16" r="12" fill="none" stroke="#a5a5a5" stroke-width="3"/><path d="M25 25l12 13" stroke="#a5a5a5" stroke-width="4"/></symbol>
<symbol id="clear" viewBox="0 0 24 20"><path d="M0 10L7 1h16v18H7z" fill="#a8a8a8"/><path d="M9 5l9 10M18 5L9 15" stroke="#fff" stroke-width="2.200"/></symbol>
<symbol id="float" viewBox="0 0 20 20"><rect x="1" y="1" width="18" height="18" fill="none" stroke="#8c8a86" stroke-width="1.500"/><path d="M4 8h8v8H4zM8 8V4h8v8h-4" fill="none" stroke="#8c8a86" stroke-width="1.500"/></symbol>
<symbol id="x" viewBox="0 0 20 20"><rect x="1" y="1" width="18" height="18" fill="none" stroke="#8c8a86" stroke-width="1.500"/><path d="M5 5l10 10M15 5L5 15" stroke="#8c8a86" stroke-width="3"/></symbol>
<symbol id="ptcloud" viewBox="0 0 40 40"><circle cx="15" cy="13" r="12" fill="#5f93cc" stroke="#234e7d"/><circle cx="36" cy="8" r="3" fill="#ddd" stroke="#333"/><circle cx="33" cy="28" r="8" fill="#1f4f85"/><circle cx="11" cy="33" r="6" fill="#1f4f85"/></symbol>
<symbol id="comma" viewBox="0 0 40 40"><path d="M8 11c0-6 7-9 12-6 8 4 7 14 3 20-3 5-7 8-12 10 6-6 8-10 7-15-6 2-10-3-10-9z" fill="#4a8acb" stroke="#2c5987"/></symbol>
<symbol id="gps" viewBox="0 0 40 40"><path d="M4 4h10v14H4zM24 4h14v14H24z" fill="#bcd5f0" stroke="#2c5987" stroke-width="1.500"/><path d="M14 1h9v20h-9z" fill="#4f86c4" stroke="#1f3d5c"/><path d="M8 22c0 8 5 13 12 14M3 22c0 12 7 18 16 18" fill="none" stroke="#2c5987" stroke-width="2"/></symbol>
<symbol id="wfs" viewBox="0 0 40 40"><circle cx="20" cy="20" r="18" fill="none" stroke="#4a8acb" stroke-width="2"/><path d="M2 20h36M5 11h30M5 29h30M20 2c-12 10-12 26 0 36M20 2c12 10 12 26 0 36" fill="none" stroke="#4a8acb" stroke-width="1.500"/><path d="M10 9l8 22 8-22h8" fill="none" stroke="#111" stroke-width="1.500"/></symbol>
<symbol id="crs-i" viewBox="0 0 40 40"><path d="M10 8h20l9 14c0 10-8 16-19 16S1 32 1 22z" fill="#c3c3c1"/><path d="M15 8l-5 28M25 8l5 28M20 8v30M6 15h28M1 23h38M4 30h32" stroke="#555" stroke-width="1.500" fill="none"/></symbol>
<symbol id="bubble" viewBox="0 0 40 40"><path d="M20 4c11 0 19 6 19 15 0 5-3 9-6 11l3 8-11-4C11 36 1 30 1 19 1 10 9 4 20 4z" fill="#a9a9a9"/><path d="M9 19h4M18 19h4M27 19h4" stroke="#fff" stroke-width="4.500"/></symbol>
<symbol id="lock" viewBox="0 0 22 30"><path d="M5 16V8a6 6 0 0112 0v8" fill="none" stroke="#b5b5b5" stroke-width="3"/><rect x="1" y="14" width="20" height="14" rx="2" fill="#8e8e8e"/></symbol>
<symbol id="mouse" viewBox="0 0 30 30"><path d="M5 5l8 12M13 2l3 13" stroke="#eee" stroke-width="5" stroke-linecap="round"/><path d="M5 5l8 12M13 2l3 13" stroke="#111" stroke-width="2"/><ellipse cx="18" cy="21" rx="7" ry="8" fill="#e8e8e8" stroke="#111" stroke-width="1.500"/><circle cx="18" cy="22" r="3" fill="#111"/></symbol>
</defs>
</svg>

<div class="window">
<header class="titlebar">
  <span class="lights"><i></i><i></i><i></i></span>
  <h1>*GVI — QGIS</h1>
</header>

<nav class="toolbar" aria-label="Project">
  <span class="grip first"></span>
  <button type="button" aria-label="New"><svg><use href="#new"/></svg></button>
  <button type="button" aria-label="Open"><svg><use href="#folder"/></svg></button>
  <button type="button" aria-label="Save"><svg><use href="#save"/></svg></button>
  <button type="button" aria-label="Layout"><svg><use href="#layout"/></svg></button>
  <button type="button" aria-label="Layout manager"><svg><use href="#layoutmgr"/></svg></button>
  <button type="button" aria-label="Style manager"><svg><use href="#style"/></svg></button>
  <span class="grip"></span>
  <button type="button" class="on" aria-label="Pan"><svg><use href="#hand"/></svg></button>
  <button type="button" aria-label="Pan to selection"><svg><use href="#pansel"/></svg></button>
  <button type="button" aria-label="Zoom in"><svg><use href="#zoomin"/></svg></button>
  <button type="button" aria-label="Zoom out"><svg><use href="#zoomout"/></svg></button>
  <button type="button" aria-label="Zoom full"><svg><use href="#zoomfull"/></svg></button>
  <button type="button" aria-label="Zoom to selection"><svg><use href="#zoomsel"/></svg></button>
  <button type="button" aria-label="Zoom to layer"><svg><use href="#zoomlayer"/></svg></button>
  <button type="button" disabled aria-label="Native resolution"><svg><use href="#zoom11"/></svg></button>
  <button type="button" aria-label="Zoom last"><svg><use href="#zoomlast"/></svg></button>
  <button type="button" disabled aria-label="Zoom next"><svg><use href="#zoomnext"/></svg></button>
  <button type="button" aria-label="New map view"><svg><use href="#newmap"/></svg></button>
  <button type="button" aria-label="New 3D view"><svg><use href="#map3d"/></svg></button>
  <button type="button" aria-label="New bookmark"><svg><use href="#bmnew"/></svg></button>
  <button type="button" aria-label="Bookmarks"><svg><use href="#bookmarks"/></svg></button>
  <button type="button" aria-label="Temporal"><svg><use href="#clock"/></svg></button>
  <button type="button" aria-label="Refresh"><svg><use href="#refresh"/></svg></button>
  <span class="grip"></span>
  <button type="button" class="drop" aria-label="Select"><svg><use href="#select"/></svg></button>
  <button type="button" class="drop" aria-label="Select by value"><svg><use href="#selform"/></svg></button>
  <button type="button" class="drop" aria-label="Deselect"><svg><use href="#deselect"/></svg></button>
  <button type="button" class="drop" aria-label="Select by location"><svg><use href="#selloc"/></svg></button>
  <span class="grip"></span>
  <button type="button" aria-label="Identify"><svg><use href="#identify"/></svg></button>
  <button type="button" aria-label="Field calculator"><svg><use href="#abacus"/></svg></button>
  <button type="button" class="on" aria-label="Toolbox"><svg><use href="#gear"/></svg></button>
  <button type="button" aria-label="Statistics"><svg><use href="#sigma"/></svg></button>
  <button type="button" class="drop" aria-label="Attribute table"><svg><use href="#table"/></svg></button>
  <button type="button" class="drop" aria-label="Measure"><svg><use href="#ruler"/></svg></button>
  <button type="button" aria-label="Map tips"><svg><use href="#tip"/></svg></button>
  <button type="button" class="drop faint" aria-label="Actions"><svg><use href="#gearplay"/></svg></button>
</nav>
<nav class="toolbar" aria-label="Layers">
  <span class="grip first"></span>
  <button type="button" aria-label="Data source manager"><svg><use href="#datasrc"/></svg></button>
  <button type="button" aria-label="New GeoPackage"><svg><use href="#gpkg"/></svg></button>
  <button type="button" aria-label="New Shapefile"><svg><use href="#vec"/></svg></button>
  <button type="button" aria-label="New SpatiaLite"><svg><use href="#splite"/></svg></button>
  <button type="button" aria-label="New scratch layer"><svg><use href="#chip"/></svg></button>
  <button type="button" aria-label="New mesh"><svg><use href="#mesh"/></svg></button>
  <button type="button" aria-label="New virtual layer"><svg><use href="#virt"/></svg></button>
  <span class="grip"></span>
  <button type="button" class="corner" disabled aria-label="Current edits"><svg><use href="#pencils"/></svg></button>
  <button type="button" aria-label="Toggle editing"><svg><use href="#pencil"/></svg></button>
  <button type="button" disabled aria-label="Save edits"><svg><use href="#save"/></svg></button>
  <button type="button" class="drop" disabled aria-label="Digitize"><svg><use href="#linepts"/></svg></button>
  <button type="button" disabled aria-label="Add point"><svg><use href="#pts"/></svg></button>
  <button type="button" class="drop" disabled aria-label="Vertex tool"><svg><use href="#vertex"/></svg></button>
  <button type="button" disabled aria-label="Modify attributes"><svg><use href="#tabedit"/></svg></button>
  <button type="button" disabled aria-label="Delete"><svg><use href="#trash"/></svg></button>
  <button type="button" disabled aria-label="Cut"><svg><use href="#cut"/></svg></button>
  <button type="button" disabled aria-label="Copy"><svg><use href="#copy"/></svg></button>
  <button type="button" disabled aria-label="Paste"><svg><use href="#paste"/></svg></button>
  <button type="button" disabled aria-label="Undo"><svg><use href="#undo"/></svg></button>
  <button type="button" disabled aria-label="Redo"><svg><use href="#redo"/></svg></button>
  <span class="grip"></span>
  <button type="button" aria-label="Labels"><svg><use href="#label"/></svg></button>
  <button type="button" aria-label="Diagrams"><svg><use href="#diagram"/></svg></button>
  <span class="sep"></span>
  <button type="button" aria-label="Pinned labels"><svg><use href="#labelpin"/></svg></button>
  <button type="button" aria-label="Unplaced labels"><svg><use href="#labelred"/></svg></button>
  <span class="sep"></span>
  <button type="button" disabled aria-label="Pin label"><svg><use href="#dimpin"/></svg></button>
  <button type="button" disabled aria-label="Show label"><svg><use href="#dimeye"/></svg></button>
  <button type="button" disabled aria-label="Move label"><svg><use href="#dimmove"/></svg></button>
  <button type="button" disabled aria-label="Rotate label"><svg><use href="#dimrot"/></svg></button>
  <button type="button" disabled aria-label="Change label"><svg><use href="#dimedit"/></svg></button>
  <span class="grip"></span>
  <button type="button" aria-label="MetaSearch"><svg><use href="#metasearch"/></svg></button>
  <span class="grip"></span>
  <button type="button" aria-label="Python console"><svg><use href="#python"/></svg></button>
  <span class="grip"></span>
  <button type="button" aria-label="Help contents"><svg><use href="#help"/></svg></button>
  <span class="grip"></span>
</nav>

<main class="work">
<aside class="dock left">
  <section class="panel browser">
    <header class="phead"><h2>탐색기</h2><svg><use href="#float"/></svg><svg><use href="#x"/></svg></header>
    <div class="ptools">
      <button type="button" aria-label="Add layer"><svg><use href="#addlayer"/></svg></button>
      <button type="button" aria-label="Refresh"><svg><use href="#refresh"/></svg></button>
      <button type="button" aria-label="Filter"><svg><use href="#filter"/></svg></button>
      <button type="button" aria-label="Collapse"><svg><use href="#collapse"/></svg></button>
      <button type="button" aria-label="Properties"><svg><use href="#info"/></svg></button>
    </div>
    <div class="listbox">
      <ul class="tree">
        <li><b class="exp"></b><svg><use href="#dir"/></svg>/Volumes</li>
        <li><b></b><svg><use href="#star"/></svg>즐겨찾기</li>
        <li><b class="exp"></b><svg><use href="#bookmarks"/></svg>공간 북마크</li>
        <li><b class="exp"></b><svg><use href="#dirmap"/></svg>프로젝트 홈</li>
        <li><b class="exp"></b><svg><use href="#dirhome"/></svg>홈</li>
        <li><b class="exp"></b><svg><use href="#dir"/></svg>/ (Macintosh HD)</li>
        <li><b></b><svg><use href="#box"/></svg>GeoPackage</li>
        <li><b></b><svg><use href="#feather"/></svg>SpatiaLite</li>
        <li><b></b><svg><use href="#elephant"/></svg>PostgreSQL</li>
        <li><b></b><svg><use href="#sap"/></svg>SAP HANA</li>
        <li><b></b><svg><use href="#mssql"/></svg>MS SQL 서버</li>
        <li><b></b><svg><use href="#oracle"/></svg>Oracle</li>
        <li><b></b><svg><use href="#globe"/></svg>WMS/WMTS</li>
        <li><b></b><svg><use href="#cube"/></svg>신</li>
        <li><b></b><svg><use href="#vtile"/></svg>Vector Tiles</li>
        <li><b class="exp open"></b><svg><use href="#xyz"/></svg>XYZ Tiles</li>
        <li class="child"><b></b><svg><use href="#xyz"/></svg>CartoDB Dark Matter No Labels</li>
        <li class="child"><b></b><svg><use href="#xyz"/></svg>CartoDB Positron No Labels</li>
        <li class="child"><b></b><svg><use href="#xyz"/></svg>CartoDB Voyager</li>
        <li class="child"><b></b><svg><use href="#xyz"/></svg>CartoDB Voyager No Labels</li>
      </ul>
      <div class="sbar t65"><i class="up"></i><span></span><i class="down"></i></div>
    </div>
  </section>
  <div class="split"></div>
  <section class="panel layers">
    <header class="phead"><h2>레이어</h2><svg><use href="#float"/></svg><svg><use href="#x"/></svg></header>
    <div class="ptools tall">
      <button type="button" aria-label="Styling"><svg><use href="#broom"/></svg></button>
      <button type="button" aria-label="Add group"><svg><use href="#addgroup"/></svg></button>
      <button type="button" class="corner" aria-label="Visibility"><svg><use href="#eye"/></svg></button>
      <button type="button" class="corner" aria-label="Filter legend"><svg><use href="#filter"/></svg></button>
      <button type="button" class="wide" aria-label="Filter by expression"><svg><use href="#eps"/></svg></button>
      <button type="button" aria-label="Expand all"><svg><use href="#expand"/></svg></button>
      <button type="button" aria-label="Collapse all"><svg><use href="#collapse"/></svg></button>
      <button type="button" aria-label="Remove layer"><svg><use href="#removelayer"/></svg></button>
    </div>
    <ul class="tree legend">
      <li class="sel"><b></b><label><input type="checkbox" checked><i class="dot tan"></i><u>잠실_도로중심선_part2_point</u></label></li>
      <li><b></b><label><input type="checkbox" checked><i class="dot teal"></i>필드 추가</label><svg class="mem"><use href="#mem"/></svg></li>
      <li class="off"><b></b><label><input type="checkbox"><i class="dot orange"></i><em>보간된 포인트</em></label><svg class="mem"><use href="#mem"/></svg></li>
      <li><b></b><label><input type="checkbox" checked><i class="line pink"></i><strong>잠실_도로중심선_part2</strong></label></li>
      <li><b></b><label><input type="checkbox" checked><i class="line blue"></i>도로중심선</label></li>
      <li class="off"><b class="exp open"></b><label><input type="checkbox"><svg><use href="#raster"/></svg><em><strong>CartoDB Voyager No Labels</strong></em></label></li>
      <li class="off"><b></b><label><input type="checkbox"><i class="none"></i><em>영역</em></label></li>
    </ul>
  </section>
</aside>

<section class="map" aria-label="Map">
<svg viewBox="504 179 1734 1471" preserveAspectRatio="xMidYMid slice">
<g class="roads">
<path d="M504 195L560 179M504 262L640 210L735 179M610 179L700 303M504 230L530 262L504 290M650 179L672 206L660 240L722 303M820 179L760 240L740 303M880 179L850 260L862 303M672 206L980 179M920 303L1000 179M940 303L1060 214L1130 179M1100 303L1160 240L1230 214L1300 225L1330 303M1160 240L1240 303M1230 214L1260 179M1240 260L1250 303M1232 298H1365M1300 225L1420 179M1365 303L1400 260L1500 200L1560 179M1500 303L1440 240L1400 179M1440 240L1560 210L1620 290M1526 179V303M1560 303L1640 179M1590 303L1680 230L1700 179M1700 200L1860 303M1740 179L1890 303M1780 179L1980 303M1620 240L1700 303M1700 179L1790 230L2000 303M1860 179L1800 303M1830 179L2238 290M1900 179L1860 303M1940 179L1890 303M1850 230L2238 330M1980 179L1930 303M2020 179L1960 303M2060 179L2010 303M2100 179L2050 303M2140 179L2085 303M2180 179L2120 303M2220 179L2150 303M2238 230L2200 303M1990 179L2238 255M2080 179L2238 225"/>
<path d="M504 621L645 603M504 648L645 640M504 733L560 880L645 900M504 846L645 845M504 876L530 960L560 1100L645 1180M504 915L600 890M504 960L645 920M504 1010L520 960M504 1060L645 985M560 880L590 1010L645 1060M504 1100L600 1010L645 1000M520 960L645 1085M504 1005L645 1130M504 1040L645 1172M504 1080L645 1210M504 1120L645 1250M504 1160L645 1290M504 1200L645 1330M504 1240L628 1355M504 1280L590 1355M600 890L560 1010M645 1080L560 1200M645 1160L560 1300M645 1240L590 1355M600 1010L520 1100M580 1110L510 1200M540 1240L504 1290M520 1290L504 1310"/>
<g transform="translate(0 1300) scale(1.084 .3333)">
<path d="M465 20L508 52 600 175 820 460 845 497M510 0L514 18 640 190 760 368 845 490M850 495L945 640 1025 795 1030 828 1042 840 1090 950 1124 1049M835 490L940 665 1035 838 1078 945 1113 1049M465 315L850 850 925 988 957 1049M465 367L755 755 798 850 818 920 838 1049M580 523L490 642 465 673M490 642L493 683 540 1049M493 683L465 720M480 703L508 940M467 720L490 910M510 805L465 862M483 865L465 888M501 895L465 943M523 921L465 1000M529 970L473 1049M500 1012L505 1049M515 990L521 1049M850 1049L890 1020 925 987 978 912M983 905L1037 840 1322 483 1358 410 1384 345M925 988L902 1049M1308 167L1358 410 1384 520M765 167L758 365M828 167L822 460M710 190L704 290M712 195L763 252M708 238L760 310M685 167L698 180 695 238M735 167L765 192M768 183L845 202 890 190 918 167M826 207L845 202V167M809 167V195M889 167V385M877 231H889M882 266H889M940 167L946 320M1002 167L822 392M940 185L889 248M1040 167L958 268 957 305M1058 167L946 320 854 432 845 495M1072 167L957 305M944 288L838 422M845 365L853 430M1002 167L1010 240M1040 167L1045 195M545 0L650 150M561 0L554 75M645 167L640 200M1325 167Q1335 215 1348 228L1384 238"/>
</g>
<g transform="translate(1500 1350) scale(.4783 .3333)">
<path d="M0 375L273 898M0 195L187 17M0 88Q50 95 98 45L125 17M0 50L15 58 0 80M15 58L52 17M72 17L95 48M187 17L230 108 315 290 412 495 475 630 500 685M318 17L405 205 497 410 590 600 680 800 730 898M347 80L465 345M378 50L435 175 497 300 537 388M407 20L437 90Q440 140 450 158M512 17L592 190 628 270Q635 300 612 320L497 410M100 97L158 212 186 268M158 212Q125 245 118 300L125 345 148 420 163 450V490L168 548 195 595 180 612 157 562M168 548L118 600M130 148L228 52M150 185L318 30M205 135L210 160M178 162L198 210M260 82L338 268M275 200L300 178M345 80L407 20M397 97L470 17M415 50L437 90L470 70 480 92 493 118M470 70L512 25M255 246L287 320Q340 265 400 205L470 140Q530 85 557 17M235 282L262 350Q248 385 252 430L283 565 258 592M283 565L395 790M230 326L246 312M230 355L250 392M287 320L262 350M280 383L390 280L370 240M262 350L330 573L447 430 420 350M315 533L450 405 390 280M308 360L365 482M280 383L340 510M363 305L422 430M283 465L315 533M330 573L497 410M425 350L575 205M455 212L557 118 597 17M472 252L592 150 655 50 662 17M520 205L590 340M542 237L592 340M565 217L628 347 700 383M497 410L592 340M223 808L545 500M180 720L330 573M273 898L447 737 590 600 665 485Q690 440 703 375L752 190 797 17M605 640L665 565Q700 510 720 445L745 360 820 95 872 17M840 17Q830 35 838 55L850 60M760 17L735 100 722 153M630 25L722 153 830 290 878 360M625 17L660 65 725 153M668 40L728 120M680 17L740 90M700 17L745 60M745 95L760 17M760 17L895 200 995 335 1080 440 1122 505 1243 683 1385 898M805 140L943 335M792 187L905 340M770 275L848 383M757 320L830 415M895 200L790 362M830 398L918 332 995 335 1203 30 1195 17M830 398L835 875M745 362L802 440V460M703 375L772 462 830 460M772 462L777 668M773 496H790M773 558H830M804 560V668M720 445L775 560M705 490L770 625H777M685 530L750 668M665 565L785 898M643 597L765 898M605 640L720 898M665 485L752 668H835L990 662H1072L1080 628 1122 505 1233 330 1438 30 1448 17M737 713H835M760 758H835M770 800H835M815 826H835M825 843H835M862 668L867 848M892 668L895 823 835 875M895 823H952L973 863M952 823L870 898M835 875L848 898M835 875L818 898M1072 662L1028 812Q1035 850 1017 898M1028 812L938 898M1028 812Q1050 820 1060 840L1105 898M1080 628L1127 650 1172 582M1127 650L1195 750M1147 618L1217 717M1080 440L1157 328Q1162 325 1175 350L1200 380M1100 468L1178 350M1080 17L1155 100M1195 17L1345 165 1410 230 1543 357M1438 30L1543 133M1312 215L1342 262 1268 375M1355 250L1465 353M1355 250L1290 410M1410 230L1310 378 1325 388 1352 385 1360 378 1380 410M1233 330L1360 505 1388 550 1543 765M1310 433L1320 415 1362 412 1370 425 1365 445 1385 470M1345 415L1352 465 1372 490M1410 300L1358 380M1435 330L1380 410M1495 310L1360 505Q1330 535 1318 570L1102 898M1527 345L1388 550 1150 898M1543 365L1415 582M1430 410L1478 478V490L1413 582M1363 585L1500 775M1298 597L1330 637M1388 622L1320 722M1410 650L1340 750M1430 680L1360 780M1450 715L1385 815M1475 745L1405 845M1295 687L1430 880M1243 683L1400 898M1500 775L1418 898M1543 708L1410 898M1543 790L1470 898M1465 830L1490 870M1525 898L1543 862M1157 805L1225 898M1180 850L1265 795 1290 825M1265 795L1195 898M1313 790L1240 898M215 635Q228 635 230 645L238 665M198 658L212 690M238 665L345 690M228 675L240 710Q252 725 262 710L325 648M250 655L337 843M310 787L393 707M400 640L447 737 525 898M440 665L475 630M447 737L475 790 580 688M500 763L565 898M475 790L500 763M555 635L675 898M515 797L595 722M533 830L612 755M525 890L640 825M565 898L655 852M610 898L628 880 633 898M660 898L750 670"/>
</g>
</g>
</svg>
</section>

<aside class="dock right">
  <header class="phead"><h2>공간 처리 툴박스</h2><svg><use href="#float"/></svg><svg><use href="#x"/></svg></header>
  <div class="ptools">
    <button type="button" class="corner" aria-label="Models"><svg><use href="#gears3"/></svg></button>
    <button type="button" class="corner" aria-label="Scripts"><svg><use href="#python"/></svg></button>
    <button type="button" aria-label="History"><svg><use href="#clock"/></svg></button>
    <button type="button" aria-label="Results"><svg><use href="#doc"/></svg></button>
    <span class="sep"></span>
    <button type="button" aria-label="Edit in place"><svg><use href="#editsel"/></svg></button>
    <span class="sep"></span>
    <button type="button" aria-label="Options"><svg><use href="#wrench"/></svg></button>
  </div>
  <label class="find"><svg><use href="#search"/></svg><input type="text" value="포인트" aria-label="검색"><svg class="clear"><use href="#clear"/></svg></label>
  <div class="listbox">
    <ul class="tree algs">
      <li class="grp sel">최근에 사용</li>
      <li><svg><use href="#gear"/></svg>X/Y 필드를 레이어에 추가</li>
      <li><svg><use href="#points"/></svg>도형 경계를 따르는 포인트</li>
      <li class="grp">네트워크 분석</li>
      <li><svg><use href="#gauge"/></svg>서비스 영역 (포인트에서)</li>
      <li><svg><use href="#gauge"/></svg>최단 경로 (레이어에서 포인트로)</li>
      <li><svg><use href="#gauge"/></svg>최단 경로 (포인트에서 레이어로)</li>
      <li><svg><use href="#gauge"/></svg>최단 경로 (포인트에서 포인트로)</li>
      <li class="grp">래스터 분석</li>
      <li><svg><use href="#gear"/></svg>래스터 값 샘플링</li>
      <li class="grp">메시</li>
      <li><svg><use href="#gear"/></svg>그리드에 메시 내보내기</li>
      <li><svg><use href="#gear"/></svg>메시 꼭짓점(들) 내보내기</li>
      <li><svg><use href="#gear"/></svg>메시 데이터셋의 포인트에서 시계열 값 내보내기</li>
      <li class="grp">벡터 도형</li>
      <li><svg><use href="#gear"/></svg>그리드에 포인트 스냅</li>
      <li><svg><use href="#points"/></svg>도형 경계를 따르는 포인트</li>
      <li><svg><use href="#gear"/></svg>라인 상에 포인트 보간</li>
      <li><svg><use href="#gear"/></svg>포인트 변위</li>
      <li><svg><use href="#gear"/></svg>포인트 투영 (직교 좌표계)</li>
      <li><svg><use href="#gear"/></svg>포인트에서 레이어 생성</li>
      <li><svg><use href="#blob"/></svg>표면 상에 있는 포인트</li>
      <li class="grp">벡터 분석</li>
      <li><svg><use href="#gear"/></svg>라인에 따라 결합 (허브 라인)</li>
      <li><svg><use href="#gear"/></svg>최근접 허브까지의 거리 (포인트)</li>
      <li><svg><use href="#blobgreen"/></svg>폴리곤에 포함하는 포인트 개수 계산</li>
      <li><svg><use href="#gear"/></svg>DBSCAN 군집 형성</li>
      <li><svg><use href="#gear"/></svg>ST-DBSCAN 군집 형성</li>
      <li class="grp">벡터 생성</li>
      <li><svg><use href="#rline"/></svg>라인을 따라 랜덤 포인트 생성</li>
      <li><svg><use href="#gear"/></svg>라인을 따라 랜덤 포인트 생성</li>
      <li><svg><use href="#gear"/></svg>라인을 따라 포인트(픽셀의 중심) 생성</li>
      <li><svg><use href="#gear"/></svg>래스터 픽셀을 포인트로 변환</li>
      <li><svg><use href="#rbox"/></svg>레이어 경계 안에 랜덤 포인트 생성</li>
      <li><svg><use href="#rbox"/></svg>범위 안에 랜덤 포인트 생성</li>
      <li><svg><use href="#rgrid"/></svg>정규 포인트</li>
      <li><svg><use href="#gear"/></svg>테이블에서 포인트 생성</li>
      <li><svg><use href="#gear"/></svg>포인트를 경로로</li>
      <li><svg><use href="#blobdots"/></svg>폴리곤 내부에 랜덤 포인트 생성</li>
      <li><svg><use href="#gear"/></svg>폴리곤 내부에 포인트(픽셀 중심) 생성</li>
      <li><svg><use href="#rpoly"/></svg>폴리곤 안에 랜덤 포인트 생성</li>
      <li class="grp prov"><b class="exp open"></b><svg><use href="#q"/></svg>벡터 테이블</li>
      <li><svg><use href="#gear"/></svg>X/Y 필드를 레이어에 추가</li>
    </ul>
    <div class="sbar t88"><i class="up"></i><span></span><i class="down"></i></div>
  </div>
  <div class="tabs"><button type="button" class="cur">공간 처리 툴박스</button><button type="button">레이어 스타일 작업</button></div>
</aside>
</main>

<footer class="status">
  <label class="locator"><svg><use href="#search"/></svg><input type="text" placeholder="위치를 찾으려면 입력하십시오 (⌘K)" aria-label="위치"></label>
  <label for="coord" class="push">좌표</label><input id="coord" class="coord" type="text" value="1947374,963698">
  <svg class="mouse"><use href="#mouse"/></svg>
  <label for="scale">축척</label><span class="spin scale"><input id="scale" type="text" value="1:12589"><span class="step one"></span></span>
  <svg class="lock"><use href="#lock"/></svg>
  <label for="mag-in">확대경</label><span class="spin"><input id="mag-in" type="text" value="100%"><span class="step"></span></span>
  <label for="rot" class="rot">회전</label><span class="spin"><input id="rot" type="text" value="0.0 °"><span class="step"></span></span>
  <label class="render"><input type="checkbox" checked>렌더링</label>
  <a class="crs" href="#crs-sel"><svg><use href="#crs-i"/></svg>EPSG:5179</a>
  <svg class="bubble"><use href="#bubble"/></svg>
</footer>
</div>

<div class="dialog" role="dialog" aria-label="데이터소스 관리자">
  <header class="dtitle"><span class="lights"><i></i><i></i><i></i></span><h2>데이터소스 관리자 — 구분자로 분리된 텍스트</h2></header>
  <div class="dbody">
    <nav class="kinds">
      <ul>
        <li><span class="ic"><svg><use href="#folder"/></svg></span>탐색기</li>
        <li><span class="ic"><svg><use href="#vecb"/></svg><svg class="badge"><use href="#b-plus"/></svg></span>벡터</li>
        <li><span class="ic"><svg class="sm"><use href="#rasterbig"/></svg><svg class="badge"><use href="#b-plus"/></svg></span>래스터</li>
        <li><span class="ic"><svg><use href="#meshb"/></svg><svg class="badge"><use href="#b-plus"/></svg></span>메시</li>
        <li><span class="ic"><svg><use href="#ptcloud"/></svg><svg class="badge"><use href="#b-plus"/></svg></span>점구름</li>
        <li class="two cur"><span class="ic"><svg><use href="#comma"/></svg><svg class="badge"><use href="#b-plus"/></svg></span><span>구분자로<br>분리된 ...</span></li>
        <li><span class="ic"><svg><use href="#box"/></svg><svg class="badge"><use href="#b-plus"/></svg></span>GeoPackage</li>
        <li><span class="ic"><svg><use href="#gps"/></svg><svg class="badge"><use href="#b-plus"/></svg></span>GPS</li>
        <li><span class="ic"><svg><use href="#feather"/></svg><svg class="badge"><use href="#b-plus"/></svg></span>SpatiaLite</li>
        <li><span class="ic"><svg class="sm"><use href="#elephant"/></svg><svg class="badge"><use href="#b-plus"/></svg></span>PostgreSQL</li>
        <li class="two"><span class="ic"><svg><use href="#mssql"/></svg><svg class="badge"><use href="#b-plus"/></svg></span><span>MS SQL<br>서버</span></li>
        <li><span class="ic"><svg class="sm"><use href="#oraclebig"/></svg><svg class="badge"><use href="#b-plus"/></svg></span>오라클</li>
        <li><span class="ic"><svg><use href="#virtb"/></svg><svg class="badge"><use href="#b-plus"/></svg></span>가상 레이어</li>
        <li><span class="ic"><svg class="sm"><use href="#sap"/></svg><svg class="badge"><use href="#b-plus"/></svg></span>SAP HANA</li>
        <li class="two"><span class="ic"><svg><use href="#globe"/></svg><svg class="badge"><use href="#b-plus"/></svg></span><span>WMS/<br>WMTS</span></li>
        <li class="two"><span class="ic"><svg><use href="#wfs"/></svg><svg class="badge"><use href="#b-plus"/></svg></span><span>WFS / OGC<br>API - 피처</span></li>
        <li><span class="ic"><svg><use href="#globe"/></svg></span></li>
      </ul>
      <div class="sbar t68"><i class="up"></i><span></span><i class="down"></i></div>
    </nav>
    <form class="form">
      <div class="frow">
        <label for="file">파일 이름</label>
        <span class="field path"><svg class="mosaic" viewBox="0 0 585 24" preserveAspectRatio="none"><path d="M4 4H585" stroke="#9a9a9a" stroke-dasharray="4 11 7 5 9 14 5 6 12 4 8 9"/><path d="M2 9H585" stroke="#cfcfcf" stroke-dasharray="5 6 4 9 10 3 6 7 13 5"/><path d="M0 14H585" stroke="#8c8c8c" stroke-dasharray="9 4 6 5 4 8 11 6 5 3"/><path d="M3 19H585" stroke="#dedede" stroke-dasharray="4 5 11 4 6 7 5 3 9 8"/><path d="M180 8H585" stroke="#555" stroke-dasharray="14 9 7 6"/></svg><input id="file" type="text" value="/gis data/잠실_도로중심선_part2_point_GVI.csv"><svg class="clear"><use href="#clear"/></svg></span>
        <button type="button" class="pb more">...</button>
      </div>
      <div class="frow second">
        <label for="lname">레이어 이름</label>
        <input id="lname" class="field" type="text" value="잠실_도로중심선_part2_point_GVI">
        <label for="enc">인코딩</label>
        <span class="combo enc"><select id="enc"><option>UTF-8</option></select></span>
      </div>
      <div class="scroller">
        <div class="groups">
          <h3>파일 포맷</h3>
          <div class="group fmt">
            <label><input type="radio" name="fmt" checked>CSV (쉼표로 구분된 값)</label>
            <label><input type="radio" name="fmt">정규 표현식 구분자</label>
            <label><input type="radio" name="fmt">사용자 정의 구분자</label>
          </div>
          <h3>레코드와 필드 옵션</h3>
          <div class="group rec">
            <div class="opts">
              <div class="skip"><label for="skip">무시할 머리글 행의 수</label><span class="spin"><input id="skip" type="text" value="0"><span class="step"></span></span></div>
              <label><input type="checkbox">쉼표를 소수점으로</label>
              <label><input type="checkbox" checked>첫번째 레코드를 필드 이름으로</label>
              <label><input type="checkbox">필드 맞춰자르기</label>
              <label><input type="checkbox" checked>필드 유형 감지</label>
              <label><input type="checkbox">비어 있는 필드 무시</label>
            </div>
            <p>사용자 지정 불 상수</p>
            <div class="group bool">
              <label for="t">참</label><input id="t" class="field yes" type="text">
              <label for="f">거짓</label><input id="f" class="field no" type="text">
            </div>
          </div>
          <h3>도형 정의</h3>
          <div class="group geom">
            <div class="gtypes">
              <label><input type="radio" name="g" checked>포인트 좌표</label>
              <label><input type="radio" name="g">WKT(well-known text)</label>
              <label><input type="radio" name="g">도형 없음 (속성만 있는 테이블)</label>
            </div>
            <div class="gfields">
              <div class="xy">
                <label for="xf">X 필드</label><span class="combo"><select id="xf"><option>x</option></select></span>
                <label for="zf">Z 필드</label><span class="combo"><select id="zf"><option></option></select></span>
                <label for="yf">Y 필드</label><span class="combo"><select id="yf"><option>y</option></select></span>
                <label for="mf">M 필드</label><span class="combo"><select id="mf"><option></option></select></span>
              </div>
              <label class="dms"><input type="checkbox">도분초 좌표</label>
              <div class="crsrow"><label for="crs-sel">도형 좌표계</label><span class="combo"><select id="crs-sel"><option>EPSG:4326 - WGS 84</option></select></span><button type="button" class="pb" aria-label="CRS"><svg><use href="#crs-i"/></svg></button></div>
            </div>
          </div>
        </div>
        <div class="sbar t74"><i class="up"></i><span></span><i class="down"></i></div>
      </div>
      <div class="actions"><button type="button" class="pb">Help</button><button type="button" class="pb add">추가 (<u>A</u>)</button><button type="button" class="pb">Close</button></div>
    </form>
  </div>
</div>
</body>
</html>
```
FILE: styles.css
```css
* { box-sizing: border-box; }
html, body { height: 100%; }
body {
  margin: 0;
  background: #fff;
  color: #dcdcdc;
  font: 21px/24px Inter, "Noto Sans CJK KR", sans-serif;
  overflow: hidden;
  position: relative;
}
h1, h2, h3, ul, p { margin: 0; padding: 0; font: inherit; }
ul { list-style: none; }
button, input, select { font: inherit; color: inherit; margin: 0; border: 0; padding: 0; background: none; }
input { min-width: 0; }
.defs { position: absolute; width: 0; height: 0; }
svg { display: block; flex: none; }

.window {
  height: 100%;
  display: flex;
  flex-direction: column;
  background: #323232;
  border-radius: 26px;
  overflow: hidden;
  border-top: 2px solid #6f6f6e;
}
.titlebar {
  flex: none;
  height: 46px;
  background: #2b2b29;
  border-bottom: 2px solid #0c0c0c;
  display: grid;
  grid-template-columns: 1fr auto 1fr;
  align-items: center;
  padding: 0 13px 2px;
}
.titlebar h1 { font-size: 22px; font-weight: 700; color: #757573; }
.lights { display: flex; gap: 13px; }
.lights i { width: 21px; height: 21px; border-radius: 50%; background: #4d4d4b; }

.toolbar {
  flex: none;
  height: 65px;
  display: flex;
  align-items: center;
  background: linear-gradient(#383838, #303030);
  border-bottom: 2px solid #666;
}
.toolbar + .toolbar { border-bottom-color: #292929; }
.toolbar button { width: 55px; height: 50px; display: flex; align-items: center; justify-content: center; flex: none; position: relative; }
.toolbar svg { width: 38px; height: 38px; }
.toolbar button.on { background: #262626; border: 2px solid #505050; border-radius: 4px; }
.toolbar button:disabled svg { opacity: .3; filter: grayscale(.6); }
.toolbar .faint svg { opacity: .5; }
.toolbar .drop { width: 75px; justify-content: flex-start; padding-left: 8px; gap: 12px; }
.toolbar .drop::after { content: ""; border: 7px solid transparent; border-top: 9px solid #b4b4b4; border-bottom: 0; }
.corner::after { content: ""; position: absolute; right: 4px; bottom: 4px; border: 5px solid transparent; border-top: 6px solid #b4b4b4; border-bottom: 0; }
.grip { width: 30px; padding-right: 5px; flex: none; display: flex; justify-content: flex-end; }
.grip::before { content: ""; width: 10px; height: 30px; background: repeating-linear-gradient(transparent 0 2px, #323232 2px 5px), repeating-linear-gradient(90deg, #8a8a8a 0 4px, transparent 4px 6px); }
.grip.first { width: 21px; }
.sep { width: 11px; height: 40px; flex: none; background: linear-gradient(90deg, transparent 5px, #282828 5px 7px, transparent 7px); }

.work { flex: 1; min-height: 0; display: grid; grid-template-columns: 504px minmax(0, 1fr) 762px; border-top: 1px solid #262626; }
.dock { display: flex; flex-direction: column; min-height: 0; }
.left { padding: 0 13px 2px 2px; }
.right { padding-left: 13px; }
.panel { display: flex; flex-direction: column; min-height: 0; }
.browser { flex: none; height: 684px; }
.layers { flex: 1; }
.phead { flex: none; height: 29px; padding: 0 2px 0 5px; display: flex; align-items: center; gap: 5px; font-size: 18px; }
.phead h2 { flex: 1; }
.phead svg { width: 19px; height: 19px; }
.ptools { flex: none; height: 52px; display: flex; align-items: center; padding-left: 3px; }
.ptools button { width: 42px; height: 42px; display: grid; place-items: center; position: relative; }
.ptools svg { width: 25px; height: 25px; }
.ptools .wide { width: 68px; display: flex; align-items: center; padding-left: 9px; gap: 10px; }
.ptools .wide::after { content: ""; border: 6px solid transparent; border-top: 7px solid #b4b4b4; border-bottom: 0; }
.ptools.tall { height: 54px; }
.split { flex: none; height: 11px; background: repeating-linear-gradient(90deg, #777 0 4px, transparent 4px 5px) center / 29px 4px no-repeat; }

.listbox { flex: 1; min-height: 0; display: flex; background: #1e1e1e; border-top: 1px solid #282828; overflow: hidden; }
.tree { flex: 1; display: flex; flex-direction: column; }
.tree li { height: 30px; display: flex; align-items: center; white-space: pre; }
.browser .tree li, .algs li { flex: 1; height: auto; }
.tree b { width: 27px; flex: none; margin-right: 6px; display: flex; justify-content: center; }
.tree .exp::before { content: ""; border: 6px solid transparent; border-left: 8px solid #a8a8a8; border-right: 0; }
.tree .exp.open::before { border: 7px solid transparent; border-top: 7px solid #a8a8a8; border-bottom: 0; }
.tree svg { width: 24px; height: 24px; margin-right: 12px; }
.tree .child { padding-left: 27px; }

.sbar { flex: none; width: 23px; display: flex; flex-direction: column; background: #363636; border: 1px solid #2a2a2a; }
.sbar span { border: 2px solid #545454; background: linear-gradient(90deg, #484848, #3c3c3c); margin-top: 1px; }
.sbar i { flex: none; height: 22px; display: grid; place-items: center; border: 1px solid #545454; background: #3e3e3e; }
.sbar i::before { content: ""; border: 6px solid transparent; }
.sbar .up::before { border-bottom: 7px solid #b8b8b8; border-top: 0; }
.sbar .down { margin-top: auto; }
.sbar .down::before { border-top: 7px solid #b8b8b8; border-bottom: 0; }
.t65 span { height: 65%; }
.t88 span { height: 85%; }
.t68 span { height: 69%; }
.t74 span { height: 69%; }

input[type=checkbox] { appearance: none; width: 22px; height: 22px; flex: none; background: #1e1e1e; border: 1px solid #292929; display: grid; place-items: center; }
input[type=checkbox]:checked::after { content: ""; width: 7px; height: 14px; border: solid #dcdcdc; border-width: 0 2px 2px 0; transform: rotate(32deg) translate(-1px, -1px); }
input[type=radio] { appearance: none; width: 24px; height: 24px; flex: none; border-radius: 50%; background: #1f1f1f; border: 1px solid #2a2a2a; display: grid; place-items: center; }
input[type=radio]:checked::after { content: ""; width: 11px; height: 11px; border-radius: 50%; background: #b0b0b0; }

.legend { background: #1e1e1e; border-top: 2px solid #282828; }
.legend li { padding: 0 8px 0 6px; }
.legend b { width: 21px; margin-right: 12px; }
.legend label { flex: 1; display: flex; align-items: center; }
.legend label svg { width: 22px; height: 22px; margin: 0 12px 0 14px; }
.legend .sel { background: #464646; color: #fff; font-weight: 700; font-size: 22px; }
.legend strong { font-weight: 700; font-size: 22px; }
.legend .off { color: #8f8f8f; }
.legend u { text-underline-offset: 3px; text-decoration-skip-ink: none; }
.legend label > i { flex: none; margin: 0 17px 0 16px; width: 14px; height: 14px; border-radius: 50%; }
.legend label > .line { width: 27px; height: 2px; border-radius: 0; margin: 0 10px; }
.legend .none { visibility: hidden; }
.tan { background: #beb297; }
.teal { background: #77898d; }
.orange { background: #ff7f0e; }
.pink { background: #e8006c; }
.blue { background: #0b82b8; }
.legend .mem { width: 26px; height: 26px; margin: 0; background: #232323; }

.map { background: #fff; min-width: 0; min-height: 0; overflow: hidden; }
.map svg { width: 100%; height: 100%; }
.roads path { fill: none; stroke: #1a8cc4; stroke-width: 1.500px; vector-effect: non-scaling-stroke; }

.right .phead { padding-left: 4px; }
.right .ptools { padding-left: 6px; }
.right .ptools button { width: 41px; }
.right .ptools .sep { width: 13px; height: 18px; }
.find { flex: none; height: 38px; margin-top: 2px; margin-bottom: 3px; display: flex; align-items: center; gap: 13px; padding: 0 13px; background: #1e1e1e; border-radius: 4px 0 0 4px; }
.find svg { width: 21px; height: 21px; }
.find input { flex: 1; }
.find .clear, .path .clear { width: 22px; height: 18px; }
.algs { color: #d8d8d8; padding-bottom: 3px; }
.algs li { padding-left: 73px; }
.algs svg { width: 25px; height: 25px; margin-right: 11px; }
.algs .grp { padding-left: 76px; color: #c4c4c4; }
.algs .sel { background: #464646; color: #fff; font-weight: 500; }
.algs .prov { padding-left: 7px; }
.algs .prov b { width: 22px; margin-right: 10px; }
.tabs { flex: none; height: 48px; display: flex; align-items: flex-start; font-size: 20px; }
.tabs button { height: 42px; padding: 5px 20px 0; border: 2px solid #454545; border-top: 0; border-radius: 0 0 4px 4px; }
.tabs .cur { height: 45px; padding: 6px 19px 0 17px; background: #383838; }

.status { flex: none; height: 49px; display: flex; align-items: center; border-top: 1px solid #2a2a2a; padding: 0 10px 0 8px; font-size: 18px; }
.status input[type=text] { font-size: 19px; }
.locator { width: 555px; height: 38px; display: flex; align-items: center; gap: 14px; padding-left: 13px; background: #1e1e1e; border-radius: 4px; }
.locator svg { width: 20px; height: 20px; }
.status .locator input { flex: 1; font-size: 21px; }
.locator input::placeholder { color: #9b9b9b; }
.push { margin-left: auto; }
.coord { width: 186px; height: 38px; margin-left: 6px; padding: 0 14px; background: #1e1e1e; border-radius: 4px; }
.mouse { width: 28px; height: 30px; margin: 0 18px 0 7px; }
.spin { display: flex; width: 155px; height: 38px; background: #1e1e1e; border-radius: 4px; overflow: hidden; margin-left: 7px; }
.spin.scale { width: 152px; }
.spin input { flex: 1; padding-left: 8px; }
.step { flex: none; width: 22px; background: #4a4a4a; border: 1px solid #5a5a5a; display: flex; flex-direction: column; align-items: center; justify-content: center; gap: 8px; }
.step::before { content: ""; border: 6px solid transparent; border-bottom: 7px solid #b0b0b0; border-top: 0; }
.step::after { content: ""; border: 6px solid transparent; border-top: 7px solid #b0b0b0; border-bottom: 0; }
.step.one { width: 34px; }
.step.one::before { content: none; }
.step.one::after { border-top-color: #1a1a1a; }
.lock { width: 22px; height: 30px; margin: 0 14px 0 21px; }
.rot { margin-left: 16px; }
.render { display: flex; align-items: center; gap: 9px; margin-left: 14px; }
.crs { display: flex; align-items: center; gap: 4px; margin-left: 27px; color: #0a0a0a; text-decoration: none; font-size: 18px; font-weight: 500; }
.crs svg { width: 25px; height: 25px; }
.bubble { width: 28px; height: 28px; margin-left: 43px; }

.dialog {
  position: absolute;
  left: 21.5%; top: 17.8%; width: 55.85%; height: 62%;
  display: flex;
  flex-direction: column;
  background: #323232;
  border: 1px solid #6b6b6b;
  border-radius: 20px;
  overflow: hidden;
  box-shadow: 0 0 0 1px #111, 0 46px 76px rgba(0, 0, 0, .66), 0 0 30px rgba(0, 0, 0, .25);
}
.dtitle { flex: none; height: 47px; background: #3a3936; border-bottom: 2px solid #0c0c0c; display: grid; grid-template-columns: 1fr auto 1fr; align-items: center; padding: 0 12px; color: #b8b7b4; }
.dtitle .lights { gap: 12px; }
.dtitle h2 { font-weight: 600; }
.dtitle i:nth-child(1) { background: #ff5f57; }
.dtitle i:nth-child(2) { background: #febc2e; }
.dtitle i:nth-child(3) { background: #28c840; }
.dbody { flex: 1; min-height: 0; display: flex; }
.kinds { flex: none; width: 210px; display: flex; background: #434343; overflow: hidden; color: #f4f4f4; }
.kinds ul { flex: 1; min-width: 0; overflow: hidden; height: 0; min-height: 100%; }
.kinds li { height: 60px; padding-left: 6px; display: flex; align-items: center; gap: 10px; line-height: 26px; white-space: nowrap; }
.kinds .two { height: 68px; }
.kinds .cur { background: #303030; color: #d4d4d4; padding-left: 11px; }
.ic { position: relative; width: 45px; height: 46px; flex: none; display: flex; }
.ic > svg { width: 43px; height: 43px; }
.ic > .sm { width: 36px; height: 36px; }
.ic > .badge { position: absolute; right: -1px; bottom: -2px; width: 18px; height: 18px; }
.kinds .sbar { width: 22px; }

.form { flex: 1; min-width: 0; display: flex; flex-direction: column; padding: 4px 7px 6px 6px; color: #e4e4e4; }
.frow { flex: none; display: flex; align-items: center; height: 40px; gap: 12px; margin-bottom: 11px; }
.frow.second { margin-bottom: 8px; }
.frow label { font-size: 20px; }
.field { flex: 1; height: 39px; background: #1e1e1e; border: 1px solid #2a2a2a; border-radius: 4px; padding: 0 4px; }
.path { display: flex; align-items: center; padding-right: 14px; }
.mosaic { width: 585px; height: 24px; }
.mosaic path { stroke-width: 5px; fill: none; }
.path input { flex: 1; }
.pb { height: 38px; border: 1px solid #585858; outline: 1px solid #262626; border-radius: 4px; background: linear-gradient(#464646, #3a3a3a); color: #000; font-weight: 500; }
.more { width: 36px; height: 30px; line-height: 20px; }
.combo { position: relative; display: flex; height: 37px; }
.combo select { appearance: none; flex: 1; width: 100%; padding: 0 7px; border: 1px solid #585858; outline: 1px solid #262626; border-radius: 4px; background: linear-gradient(#464646, #3a3a3a); color: #000; font-weight: 500; }
.combo::after { content: ""; position: absolute; right: 11px; top: 15px; border: 7px solid transparent; border-top: 8px solid #1a1a1a; border-bottom: 0; }
.enc { width: 254px; }
.scroller { flex: 1; min-height: 0; display: flex; overflow: hidden; }
.groups { flex: 1; min-width: 0; height: 0; min-height: 100%; overflow: hidden; padding-left: 2px; }
h3 { height: 34px; display: flex; align-items: center; gap: 18px; padding-left: 2px; }
h3::before { content: "▽"; font: 18px/20px "DejaVu Sans"; color: #0a0a0a; }
.group { border: 1px solid #3e3e3e; border-radius: 4px; }
.group label { display: flex; align-items: center; }
.group input[type=checkbox], .group input[type=radio] { margin-right: 9px; }
.fmt { height: 198px; padding: 18px 20px 14px; display: flex; flex-direction: column; justify-content: space-around; margin-bottom: 11px; }
.rec { padding: 18px 22px 21px 20px; margin-bottom: 10px; }
.opts { display: grid; grid-template-columns: 697px 1fr; grid-auto-rows: 48px; align-items: center; }
.skip { display: flex; align-items: center; justify-content: space-between; padding-right: 25px; }
.skip .spin { width: 328px; margin: 0; height: 36px; }
.rec p { height: 37px; padding: 7px 2px; }
.bool { display: flex; align-items: center; gap: 12px; padding: 22px 20px; }
.bool .yes { flex: 20; }
.bool .no { flex: 21; }
.geom { height: 260px; padding: 22px 22px 0 20px; display: flex; }
.gtypes { width: 329px; flex: none; display: flex; flex-direction: column; gap: 35px; padding-top: 18px; white-space: nowrap; }
.gfields { flex: 1; min-width: 0; }
.xy { display: grid; grid-template-columns: 59px 1fr 63px 1fr; gap: 13px 12px; }
.xy label, .crsrow label { font-size: 20px; white-space: nowrap; }
.gfields .dms { margin: 19px 0 9px 71px; }
.crsrow { display: flex; gap: 12px; }
.crsrow .combo { flex: 1; }
.crsrow .pb { width: 38px; display: grid; place-items: center; }
.crsrow svg { width: 24px; height: 24px; }
.scroller .sbar { width: 23px; }
.actions { flex: none; height: 86px; padding-bottom: 1px; display: flex; align-items: flex-end; gap: 14px; }
.actions .pb { width: 130px; }
.actions .add { margin-left: auto; }
```
